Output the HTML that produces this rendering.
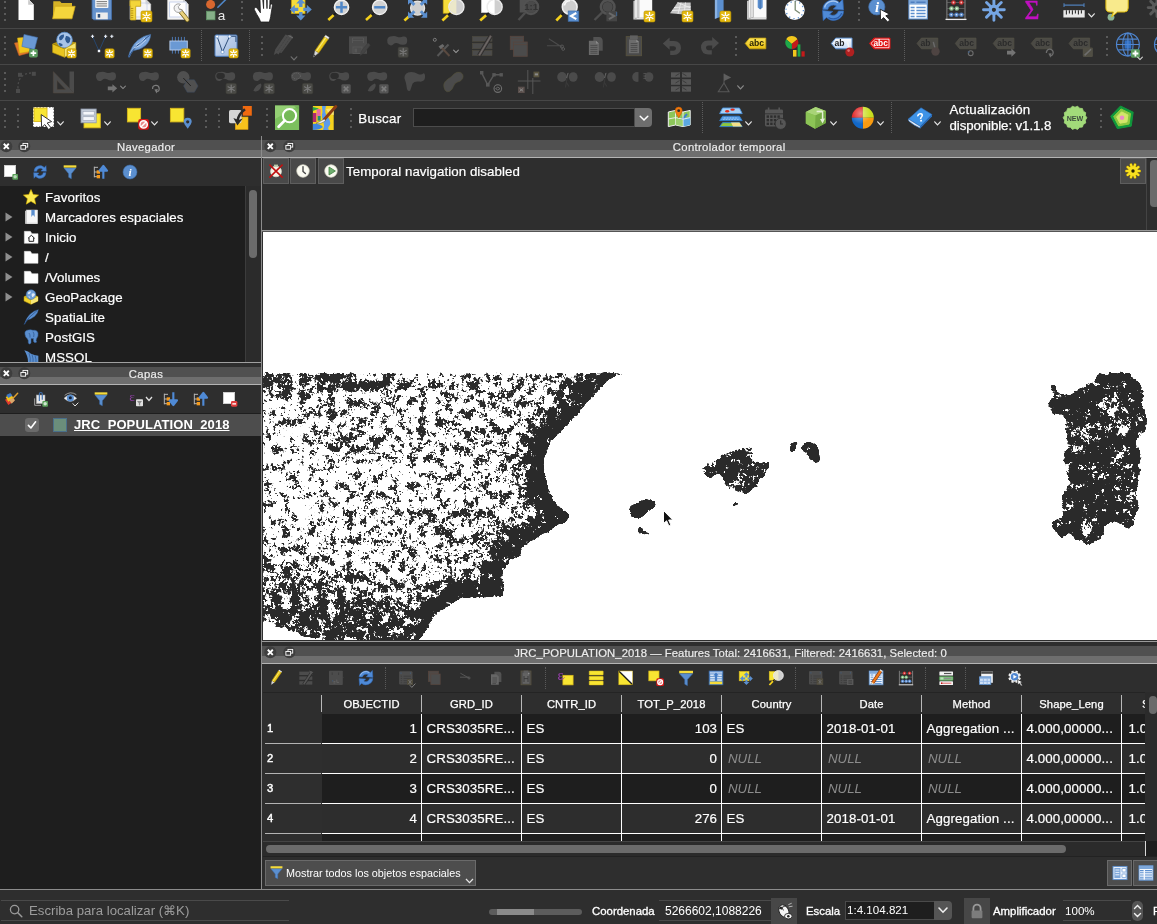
<!DOCTYPE html>
<html lang="es"><head><meta charset="utf-8"><title>QGIS</title>
<style>
html,body{margin:0;padding:0}
body{width:1157px;height:924px;overflow:hidden;background:#2e2e2e;position:relative;font-family:"Liberation Sans", sans-serif;}
#r{position:absolute;left:0;top:0;width:1157px;height:924px;overflow:hidden;will-change:transform}
#r>div,#r>span,#r>svg{position:absolute;display:block}
span{white-space:nowrap}
svg{overflow:visible}
</style></head>
<body>
<div id="r">
<div style="left:0px;top:28px;width:1157px;height:1px;background:#474747;"></div>
<div style="left:0px;top:64px;width:1157px;height:1px;background:#474747;"></div>
<div style="left:0px;top:100px;width:1157px;height:1px;background:#474747;"></div>
<svg style="left:14px;top:-4px" width="24" height="24" viewBox="0 0 24 24"><path d="M4.5 3 L14.2 3 L19.8 8.8 L19.8 24 L4.5 24 Z" fill="#fff"/><path d="M14.2 3 L14.2 8.8 L19.8 8.8 Z" fill="#c9c9c9"/><path d="M14.2 3.4 L19.4 8.8" stroke="#eee" stroke-width="0.8"/></svg>
<svg style="left:52px;top:-4px" width="24" height="24" viewBox="0 0 24 24"><path d="M1.3 5.3 L8 5.3 L9.5 7 L20 7 L20 12 L1 22.8 Z" fill="#d6b326"/><path d="M3.1 10.3 L23.2 10.3 L20 22.8 L0.6 22.8 Z" fill="#f4d53c" stroke="#d0a91a" stroke-width="0.7"/></svg>
<svg style="left:90px;top:-4px" width="24" height="24" viewBox="0 0 24 24"><path d="M2.1 3 L21.5 3 L21.5 23.8 L3.6 23.8 L2.1 22.3 Z" fill="#6592cc" stroke="#456fa8" stroke-width="0.8"/><rect x="5.2" y="3.4" width="13.2" height="8.7" rx="0.8" fill="#f4f4f4"/><path d="M6.5 5.6 L17 5.6 M6.5 7.8 L17 7.8 M6.5 10 L17 10" stroke="#6e6e6e" stroke-width="0.9"/><rect x="5.9" y="16.5" width="11.9" height="6.8" fill="#ececec"/><rect x="7.7" y="18" width="2.5" height="3.6" fill="#2f4f7a"/></svg>
<svg style="left:128px;top:-4px" width="24" height="24" viewBox="0 0 24 24"><path d="M2 3 L17.5 3 L22.7 8.2 L22.7 23.4 L2 23.4 Z" fill="#f6f6f6" stroke="#d4d4d4" stroke-width="0.6"/><path d="M17.5 3 L17.5 8.2 L22.7 8.2 Z" fill="#d0d0d0"/><rect x="5" y="7" width="14" height="14" fill="none" stroke="#c9d3ea" stroke-width="0.8"/><path d="M2 4.6 L12.7 4.6 L12.7 10.3 L7.7 10.3 L7.7 24 L2.6 24 L2.6 10 L2 10 Z" fill="#f3d53a" stroke="#c29e12" stroke-width="0.8"/><path d="M2.8 12.5 L5.3 12.5 M2.8 14.8 L5.3 14.8 M2.8 17.1 L5.3 17.1 M2.8 19.4 L5.3 19.4 M2.8 21.7 L5.3 21.7" stroke="#a8840a" stroke-width="0.8"/><rect x="13" y="15" width="11" height="11" rx="1.6" fill="#e4b90f" stroke="#b48d00" stroke-width="0.6"/><path d="M18.50 16.54 L18.50 24.46 M15.07 18.52 L21.93 22.48 M21.93 18.52 L15.07 22.48 " stroke="#fff" stroke-width="1.35" stroke-linecap="round"/><circle cx="18.5" cy="20.5" r="0.75" fill="#d8a800"/></svg>
<svg style="left:166px;top:-4px" width="24" height="24" viewBox="0 0 24 24"><path d="M1.6 3 L17 3 L22.3 8.2 L22.3 23.4 L1.6 23.4 Z" fill="#f6f6f6" stroke="#d4d4d4" stroke-width="0.6"/><path d="M17 3 L17 8.2 L22.3 8.2 Z" fill="#d0d0d0"/><rect x="3.6" y="6" width="16.5" height="15" fill="#fff" stroke="#c3cfea" stroke-width="0.9"/><path d="M14.2 15 L21.3 23.8" stroke="#6a5a1a" stroke-width="4.4" stroke-linecap="round"/><path d="M14.2 15 L21.3 23.8" stroke="#ead27c" stroke-width="3" stroke-linecap="round"/><path d="M14.5 8.4 A4.3 4.3 0 1 0 16.3 13.9 L13.2 13.2 L12.3 10.6 Z" fill="#f2f2f2" stroke="#9a9a9a" stroke-width="0.9"/></svg>
<svg style="left:204px;top:-4px" width="24" height="24" viewBox="0 0 24 24"><circle cx="6.6" cy="8.4" r="4.5" fill="#d8672f"/><path d="M13.9 11.3 L22.3 3" stroke="#4f86c6" stroke-width="1.6" stroke-linecap="round"/><rect x="2.4" y="15.2" width="8.6" height="8.6" fill="#86b089" stroke="#5f9465" stroke-width="0.7"/><text x="17.6" y="23.6" text-anchor="middle" font-family="Liberation Sans, sans-serif" font-size="13.5" fill="#e9e9e9">a</text></svg>
<svg style="left:251px;top:-4px" width="24" height="24" viewBox="0 0 24 24"><path d="M9.6 26 L18.4 26 C19 23 19.7 21.5 19.9 19 L21.4 9.6 C21.5 7.6 19.4 7.4 19.2 9.2 L18.8 13 L18.9 4.5 C18.9 2.4 16.2 2.4 16.2 4.5 L16 12.6 L15.6 2.8 C15.5 0.8 12.7 0.8 12.7 2.8 L12.6 12.6 L11.8 4.2 C11.6 2.2 8.9 2.4 9 4.4 L9.4 16.8 L6.3 12.4 C5 10.6 2.6 11.8 3.4 13.8 C4.6 17 6.6 19.4 8.2 22.4 Z" fill="#fff" stroke="#1c1c1c" stroke-width="0.8" stroke-linejoin="round"/></svg>
<svg style="left:289px;top:-4px" width="24" height="24" viewBox="0 0 24 24"><rect x="2.6" y="3.5" width="13.4" height="14" fill="#f6dc3a" stroke="#c9a50f" stroke-width="0.8"/><path d="M22.8 13.4 L17.8 18.0 L17.8 15.1 L14.3 15.1 L14.3 11.7 L17.8 11.7 L17.8 8.8 Z" fill="#5b8fcf"/><path d="M0.8 13.4 L5.8 8.8 L5.8 11.7 L9.3 11.7 L9.3 15.1 L5.8 15.1 L5.8 18.0 Z" fill="#5b8fcf"/><path d="M11.8 24.4 L7.2 19.4 L10.1 19.4 L10.1 15.9 L13.5 15.9 L13.5 19.4 L16.4 19.4 Z" fill="#5b8fcf"/><path d="M11.8 2.4 L16.4 7.4 L13.5 7.4 L13.5 10.9 L10.1 10.9 L10.1 7.4 L7.2 7.4 Z" fill="#5b8fcf"/></svg>
<svg style="left:327px;top:-4px" width="24" height="24" viewBox="0 0 24 24"><path d="M9.2 16.6 L6.6 19.1" stroke="#1a1a1a" stroke-width="1.6"/><path d="M6.6 19.1 L1.3 24" stroke="#f4d01c" stroke-width="2.6" stroke-linecap="butt"/><circle cx="14.5" cy="11.3" r="7.2" fill="#d2d2d2" stroke="#f2f2f2" stroke-width="1.3"/><path d="M9 11.3 L20 11.3 M14.5 5.8 L14.5 16.8" stroke="#4f86c6" stroke-width="2.5"/></svg>
<svg style="left:365px;top:-4px" width="24" height="24" viewBox="0 0 24 24"><path d="M9.4 16.6 L6.6 19.1" stroke="#1a1a1a" stroke-width="1.6"/><path d="M6.6 19.1 L1 24" stroke="#f4d01c" stroke-width="2.6" stroke-linecap="butt"/><circle cx="14.7" cy="11.3" r="7.2" fill="#d2d2d2" stroke="#f2f2f2" stroke-width="1.3"/><path d="M9.2 11.3 L20.2 11.3" stroke="#4f86c6" stroke-width="2.5"/></svg>
<svg style="left:403px;top:-4px" width="24" height="24" viewBox="0 0 24 24"><path d="M9.4 17.3 L6.8 19.7" stroke="#1a1a1a" stroke-width="1.6"/><path d="M6.8 19.7 L1.4 24.5" stroke="#f4d01c" stroke-width="2.6" stroke-linecap="butt"/><circle cx="14.6" cy="12.1" r="7" fill="#cfcfcf" stroke="#e6e6e6" stroke-width="1.3"/><path d="M5.0 2.5 L11.2 2.5 L5.0 8.7 Z" fill="#5b8fcf"/><path d="M7.0 4.5 L11.4 8.9" stroke="#5b8fcf" stroke-width="3"/><path d="M24.2 2.5 L18.0 2.5 L24.2 8.7 Z" fill="#5b8fcf"/><path d="M22.2 4.5 L17.8 8.9" stroke="#5b8fcf" stroke-width="3"/><path d="M5.0 21.7 L11.2 21.7 L5.0 15.5 Z" fill="#5b8fcf"/><path d="M7.0 19.7 L11.4 15.3" stroke="#5b8fcf" stroke-width="3"/><path d="M24.2 21.7 L18.0 21.7 L24.2 15.5 Z" fill="#5b8fcf"/><path d="M22.2 19.7 L17.8 15.3" stroke="#5b8fcf" stroke-width="3"/></svg>
<svg style="left:441px;top:-4px" width="24" height="24" viewBox="0 0 24 24"><rect x="2.2" y="2" width="10" height="15.2" fill="#f6dc3a" stroke="#c9a50f" stroke-width="0.7"/><path d="M9.8 16.5 L7.0 19.2" stroke="#1a1a1a" stroke-width="1.6"/><path d="M7.0 19.2 L1.4 24.5" stroke="#f4d01c" stroke-width="2.6" stroke-linecap="butt"/><circle cx="15.4" cy="10.9" r="7.6" fill="#cfcfcf" stroke="#ededed" stroke-width="1.3"/><path d="M15.4 3.900000000000001 A7.0 7.0 0 0 0 15.4 17.9 Z" fill="#ece8c9"/></svg>
<svg style="left:479px;top:-4px" width="24" height="24" viewBox="0 0 24 24"><rect x="2.5" y="2" width="10" height="14.5" fill="#fff" stroke="#d6d6d6" stroke-width="0.7"/><path d="M10.0 16.5 L7.1 19.2" stroke="#1a1a1a" stroke-width="1.6"/><path d="M7.1 19.2 L1.2 24.5" stroke="#f4d01c" stroke-width="2.6" stroke-linecap="butt"/><circle cx="15.6" cy="10.9" r="7.6" fill="#cfcfcf" stroke="#ededed" stroke-width="1.3"/><path d="M15.6 3.900000000000001 A7.0 7.0 0 0 0 15.6 17.9 Z" fill="#fff"/></svg>
<svg style="left:517px;top:-4px" width="24" height="24" viewBox="0 0 24 24"><rect x="2.7" y="2" width="9" height="14.5" fill="#515151"/><path d="M8.2 16.7 L1.5 24" stroke="#4e4e4e" stroke-width="2.4"/><circle cx="14" cy="10.9" r="7.0" fill="none" stroke="#525252" stroke-width="2.6"/><circle cx="14" cy="10.9" r="6" fill="#4a4a4a"/><text x="14.2" y="14.4" text-anchor="middle" font-family="Liberation Sans, sans-serif" font-weight="700" font-size="9.5" fill="#333">1:1</text></svg>
<svg style="left:555px;top:-4px" width="24" height="24" viewBox="0 0 24 24"><path d="M9.2 16.4 L6.6 19.1" stroke="#1a1a1a" stroke-width="1.6"/><path d="M6.6 19.1 L1.3 24.5" stroke="#f4d01c" stroke-width="2.6" stroke-linecap="butt"/><circle cx="14.7" cy="10.9" r="7.4" fill="#cdcdcd" stroke="#f0f0f0" stroke-width="1.6"/><path d="M9.5 9.5 A5.5 5.5 0 0 1 15 4.8" stroke="#fafafa" stroke-width="1.6" fill="none"/><rect x="13.2" y="15" width="10.6" height="10.3" fill="#5b8fcf" stroke="#3f6ea8" stroke-width="0.7"/><path d="M21.3 17 L16 20.1 L21.3 23.2" stroke="#fff" stroke-width="2.1" fill="none"/></svg>
<svg style="left:593px;top:-4px" width="24" height="24" viewBox="0 0 24 24"><path d="M9.1 16.5 L1.5 24" stroke="#4e4e4e" stroke-width="2.4"/><circle cx="14.7" cy="10.9" r="6.8" fill="none" stroke="#525252" stroke-width="2.6"/><circle cx="14.7" cy="10.9" r="5" fill="#4c4c4c"/><rect x="13.4" y="15" width="10.6" height="10.3" fill="#454545"/><path d="M16 17 L21.3 20.1 L16 23.2" stroke="#6a6a6a" stroke-width="2" fill="none"/><rect x="23" y="16" width="1.2" height="4" fill="#3f5f85"/></svg>
<svg style="left:632px;top:-4px" width="24" height="24" viewBox="0 0 24 24"><path d="M1.4 5 L8 2 L8 21 L1.4 23.4 Z" fill="#c9c9c9"/><rect x="7.5" y="2" width="12.7" height="19.4" fill="#fafafa"/><path d="M1.4 23.4 L7.5 21 L20.2 21 L20.2 23.4 Z" fill="#e2e2e2"/><path d="M4 3.5 L4 21.5" stroke="#f4f4f4" stroke-width="1.4"/><rect x="12" y="15" width="11" height="11" rx="1.6" fill="#e4b90f" stroke="#b48d00" stroke-width="0.6"/><path d="M17.50 16.54 L17.50 24.46 M14.07 18.52 L20.93 22.48 M20.93 18.52 L14.07 22.48 " stroke="#fff" stroke-width="1.35" stroke-linecap="round"/><circle cx="17.5" cy="20.5" r="0.75" fill="#d8a800"/></svg>
<svg style="left:670px;top:-4px" width="24" height="24" viewBox="0 0 24 24"><path d="M0 17.2 L7.5 6.5 L20.7 6.5 L20.7 16.5 L14 18.5 Z" fill="#c6c6c6"/><path d="M4 11.6 L20.7 10.6 M2 14.6 L20.7 13.6 M11 6.5 L8 17.8 M15.5 6.5 L14 18 M7.5 6.5 L20.7 12" stroke="#ececec" stroke-width="0.9" fill="none"/><rect x="12" y="15" width="11" height="11" rx="1.6" fill="#e4b90f" stroke="#b48d00" stroke-width="0.6"/><path d="M17.50 16.54 L17.50 24.46 M14.07 18.52 L20.93 22.48 M20.93 18.52 L14.07 22.48 " stroke="#fff" stroke-width="1.35" stroke-linecap="round"/><circle cx="17.5" cy="20.5" r="0.75" fill="#d8a800"/></svg>
<svg style="left:708px;top:-4px" width="24" height="24" viewBox="0 0 24 24"><path d="M6.9 0 L15.6 0 L15.6 20 L6.9 22.8 Z" fill="#5b8fcf"/><path d="M6.9 0 L9.2 0 L9.2 22 L6.9 22.8 Z" fill="#8ab2e2"/><rect x="11.9" y="15" width="11" height="11" rx="1.6" fill="#e4b90f" stroke="#b48d00" stroke-width="0.6"/><path d="M17.40 16.54 L17.40 24.46 M13.97 18.52 L20.83 22.48 M20.83 18.52 L13.97 22.48 " stroke="#fff" stroke-width="1.35" stroke-linecap="round"/><circle cx="17.4" cy="20.5" r="0.75" fill="#d8a800"/></svg>
<svg style="left:745px;top:-4px" width="24" height="24" viewBox="0 0 24 24"><path d="M2 5 L9.6 2 L9.6 21 L2 23.4 Z" fill="#c4c4c4"/><rect x="9" y="2" width="12.5" height="19.4" fill="#fafafa"/><path d="M2 23.4 L9 21 L21.5 21 L21.5 23.4 Z" fill="#dedede"/><path d="M4.6 4 L4.6 21.5 M7 3 L7 21" stroke="#f2f2f2" stroke-width="1.2"/><path d="M12.7 2 L17.7 2 L17.7 11.5 L15.2 13.4 L12.7 11.5 Z" fill="#5b8fcf"/><path d="M15.2 2 L15.2 13" stroke="#3f6ea8" stroke-width="0.8"/></svg>
<svg style="left:783px;top:-4px" width="24" height="24" viewBox="0 0 24 24"><circle cx="11.7" cy="14" r="10" fill="#fff"/><circle cx="11.7" cy="14" r="8.7" fill="none" stroke="#5b8fcf" stroke-width="1.3" stroke-dasharray="1.3 3.25"/><path d="M12.2 5.5 L12.2 14 L16.5 17" stroke="#7a8a72" stroke-width="1.3" fill="none" stroke-linecap="round"/></svg>
<svg style="left:821px;top:-4px" width="24" height="24" viewBox="0 0 24 24"><path d="M1.8 13.5 A10 9.6 0 0 1 18.5 6.5 L21.8 3.2 L22.6 14 L12.2 13 L15.3 10 A5.6 5.4 0 0 0 6.8 13.5 Z" fill="#4f8ad6" stroke="#2f66b3" stroke-width="0.7"/><path d="M22.6 15 A10 9.6 0 0 1 5.5 21.5 L2.2 24.6 L1.5 14.5 L11.8 15.5 L8.7 18.3 A5.6 5.4 0 0 0 17.4 15 Z" fill="#4f8ad6" stroke="#2f66b3" stroke-width="0.7"/><path d="M3.6 11.5 A8.6 8.2 0 0 1 17 6.6" stroke="#a8c8f0" stroke-width="1.3" fill="none"/><path d="M20.6 17 A8.6 8.2 0 0 1 7.5 21.5" stroke="#2a5ca8" stroke-width="1.2" fill="none"/></svg>
<svg style="left:867px;top:-4px" width="24" height="24" viewBox="0 0 24 24"><circle cx="9.8" cy="10.9" r="8.1" fill="#5b8fcf" stroke="#4472b0" stroke-width="0.7"/><text x="10.2" y="16.4" font-family="Liberation Serif, serif" font-style="italic" font-weight="700" font-size="15" fill="#fff" text-anchor="middle">i</text><path d="M13.2 13.2 L13.6 24.4 L16.6 21.6 L20.6 26 L22.8 24 L18.8 19.8 L22.6 18.2 Z" fill="#fff" stroke="#1e1e1e" stroke-width="0.9" stroke-linejoin="round"/></svg>
<svg style="left:906px;top:-4px" width="24" height="24" viewBox="0 0 24 24"><rect x="2.9" y="2" width="18.4" height="21" fill="#fff" stroke="#5b8fcf" stroke-width="1"/><rect x="2.9" y="2" width="18.4" height="6.6" fill="#7fa8da"/><path d="M4.6 6.2 L8.6 6.2 M10.4 6.2 L19.6 6.2" stroke="#4f7fc0" stroke-width="1.6"/><path d="M4.6 11.6 L8.6 11.6 M10.4 11.6 L19.6 11.6 M4.6 14.6 L8.6 14.6 M10.4 14.6 L19.6 14.6 M4.6 17.6 L8.6 17.6 M10.4 17.6 L19.6 17.6 M4.6 20.6 L8.6 20.6 M10.4 20.6 L19.6 20.6 " stroke="#5b8fcf" stroke-width="1.5"/></svg>
<svg style="left:944px;top:-4px" width="24" height="24" viewBox="0 0 24 24"><path d="M2.9 0 L2.9 23 M21 0 L21 23" stroke="#8e8e8e" stroke-width="0.9"/><path d="M2.9 6.5 L21 6.5 M2.9 12.5 L21 12.5 M2.9 18.7 L21 18.7" stroke="#6e6e6e" stroke-width="0.7"/><path d="M1.5 23.4 L22.5 23.4" stroke="#ededed" stroke-width="1.3"/><circle cx="9.5" cy="6.5" r="2.3" fill="#c93030"/><circle cx="9.5" cy="6.5" r="0.9" fill="#f6c0c0"/><circle cx="17.3" cy="6.5" r="2.3" fill="#c93030"/><circle cx="17.3" cy="6.5" r="0.9" fill="#f6c0c0"/><circle cx="7.5" cy="12.5" r="2.3" fill="#86b888"/><circle cx="7.5" cy="12.5" r="0.9" fill="#e6f4e6"/><circle cx="12.8" cy="12.5" r="2.3" fill="#86b888"/><circle cx="12.8" cy="12.5" r="0.9" fill="#e6f4e6"/><circle cx="7.3" cy="18.7" r="2.3" fill="#4f7fc0"/><circle cx="7.3" cy="18.7" r="0.9" fill="#d6e6fa"/><circle cx="12.5" cy="18.7" r="2.3" fill="#4f7fc0"/><circle cx="12.5" cy="18.7" r="0.9" fill="#d6e6fa"/><circle cx="17.4" cy="18.7" r="2.3" fill="#4f7fc0"/><circle cx="17.4" cy="18.7" r="0.9" fill="#d6e6fa"/></svg>
<svg style="left:982px;top:-4px" width="24" height="24" viewBox="0 0 24 24"><path d="M11.90 17.80 L11.90 24.20 M9.07 16.63 L4.55 21.15 M7.90 13.80 L1.50 13.80 M9.07 10.97 L4.55 6.45 M11.90 9.80 L11.90 3.40 M14.73 10.97 L19.25 6.45 M15.90 13.80 L22.30 13.80 M14.73 16.63 L19.25 21.15 " stroke="#75a5e3" stroke-width="2.9" stroke-linecap="round"/><circle cx="11.9" cy="13.8" r="3.7" fill="none" stroke="#75a5e3" stroke-width="3.2"/></svg>
<svg style="left:1020px;top:-4px" width="24" height="24" viewBox="0 0 24 24"><text x="12" y="23.4" text-anchor="middle" font-family="Liberation Serif, serif" font-size="27" fill="#c010c0" stroke="#c010c0" stroke-width="0.5" textLength="15" lengthAdjust="spacingAndGlyphs">Σ</text></svg>
<svg style="left:1062px;top:-4px" width="24" height="24" viewBox="0 0 24 24"><path d="M2 9.1 L22 9.1 M2 7.2 L2 11 M22 7.2 L22 11" stroke="#4f7fb8" stroke-width="1.1"/><rect x="1.4" y="14.2" width="21.3" height="7.3" fill="#e9e9e9"/><path d="M4.4 14.2 L4.4 18.4 M7.4 14.2 L7.4 17.4 M10.4 14.2 L10.4 18.4 M13.4 14.2 L13.4 17.4 M16.4 14.2 L16.4 18.4 M19.4 14.2 L19.4 17.4" stroke="#2d2d2d" stroke-width="1.1"/></svg>
<svg style="left:1105px;top:-4px" width="24" height="24" viewBox="0 0 24 24"><circle cx="6" cy="21.2" r="3.4" fill="#8cb696"/><path d="M5 0 L19.5 0 Q23.2 0 23.2 4 L23.2 12 Q23.2 16 19.5 16 L12.5 16 L6.6 20.8 L8.4 16 L5 16 Q0.9 16 0.9 12 L0.9 4 Q0.9 0 5 0 Z" fill="#f8ea8c" stroke="#dcb80a" stroke-width="1"/></svg>
<svg style="left:1144px;top:-4px" width="24" height="24" viewBox="0 0 24 24"><path d="M13.00 15.60 L13.00 20.44 M10.17 14.43 L6.75 17.85 M9.00 11.60 L4.16 11.60 M10.17 8.77 L6.75 5.35 M13.00 7.60 L13.00 2.76 M15.83 8.77 L19.25 5.35 M17.00 11.60 L21.84 11.60 M15.83 14.43 L19.25 17.85 " stroke="#5a5a5a" stroke-width="2.9" stroke-linecap="round"/><circle cx="13" cy="11.6" r="3.7" fill="none" stroke="#5a5a5a" stroke-width="3.2"/></svg>
<div style="left:4px;top:0.5px;width:2px;height:2px;background:#5a5a5a;"></div>
<div style="left:4px;top:6.5px;width:2px;height:2px;background:#5a5a5a;"></div>
<div style="left:4px;top:12.5px;width:2px;height:2px;background:#5a5a5a;"></div>
<div style="left:4px;top:18.5px;width:2px;height:2px;background:#5a5a5a;"></div>
<div style="left:241px;top:0.5px;width:2px;height:2px;background:#5a5a5a;"></div>
<div style="left:241px;top:6.5px;width:2px;height:2px;background:#5a5a5a;"></div>
<div style="left:241px;top:12.5px;width:2px;height:2px;background:#5a5a5a;"></div>
<div style="left:241px;top:18.5px;width:2px;height:2px;background:#5a5a5a;"></div>
<div style="left:858px;top:0.5px;width:2px;height:2px;background:#5a5a5a;"></div>
<div style="left:858px;top:6.5px;width:2px;height:2px;background:#5a5a5a;"></div>
<div style="left:858px;top:12.5px;width:2px;height:2px;background:#5a5a5a;"></div>
<div style="left:858px;top:18.5px;width:2px;height:2px;background:#5a5a5a;"></div>
<svg style="left:1088px;top:13px" width="7" height="5" viewBox="0 0 7 5"><path d="M0.7 0.8 L3.5 3.8 L6.3 0.8" stroke="#e8e8e8" stroke-width="1.2" fill="none" stroke-linecap="round"/></svg>
<svg style="left:14px;top:34px" width="24" height="24" viewBox="0 0 24 24"><path d="M0.4 9 L10 7.3 L14.8 19 L5 21.7 Z" fill="#e0762e" stroke="#b85a1c" stroke-width="0.5"/><path d="M3.5 4 L14 2.9 L16 17.5 L5.5 19.2 Z" fill="#f2c71c" stroke="#c9a20f" stroke-width="0.5"/><path d="M10 0.4 L23.6 3.5 L20.5 15.4 L7.9 12.5 Z" fill="#6a99d4" stroke="#4472b0" stroke-width="0.6"/><rect x="15" y="15" width="8.8" height="8.4" rx="1.6" fill="#5a9a5e"/><path d="M19.4 16.4 L19.4 22 M16.6 19.2 L22.2 19.2" stroke="#fff" stroke-width="1.7"/></svg>
<svg style="left:52px;top:34px" width="24" height="24" viewBox="0 0 24 24"><path d="M0.6 9.5 L12.5 5.5 L23.8 8.5 L12.5 15 Z" fill="#b8960a"/><circle cx="12.5" cy="6" r="7.8" fill="#a8c4e8" stroke="#5b8fcf" stroke-width="0.8"/><path d="M7 3.5 Q8.5 0.5 12 0.5 Q12.5 3 10.5 5 Q9 7 7.5 6 Z M14 2 Q17 1.5 18.5 4.5 Q18.5 8 16 9.5 Q13.5 8 13 5 Z M6.5 9 Q9 8.5 11 11 Q9.5 13 7.5 11.5 Z" fill="#2f5a92"/><path d="M0.6 10 L12.5 15 L12.5 23.3 L0.6 18.5 Z" fill="#e9c520" stroke="#b8960a" stroke-width="0.6"/><path d="M12.5 15 L23.8 8.5 L23.8 17 L12.5 23.3 Z" fill="#f7e672" stroke="#c9a50f" stroke-width="0.6"/><rect x="15" y="14.8" width="9.2" height="9.2" rx="1.6" fill="#e4b90f" stroke="#b48d00" stroke-width="0.6"/><path d="M19.60 16.09 L19.60 22.71 M16.73 17.74 L22.47 21.06 M22.47 17.74 L16.73 21.06 " stroke="#fff" stroke-width="1.35" stroke-linecap="round"/><circle cx="19.6" cy="19.4" r="0.75" fill="#d8a800"/></svg>
<svg style="left:90px;top:34px" width="24" height="24" viewBox="0 0 24 24"><path d="M2.5 2.3 L9 17 L15.6 2.3" stroke="#27466e" stroke-width="1" fill="none"/><path d="M0.8999999999999999 2.3 L4.1 2.3 M2.5 0.6999999999999997 L2.5 3.9" stroke="#e8eef8" stroke-width="1.1"/><path d="M14.0 2.3 L17.2 2.3 M15.6 0.6999999999999997 L15.6 3.9" stroke="#e8eef8" stroke-width="1.1"/><path d="M20.2 2.3 L23.400000000000002 2.3 M21.8 0.6999999999999997 L21.8 3.9" stroke="#e8eef8" stroke-width="1.1"/><rect x="7.8" y="15.8" width="2.4" height="2.4" fill="#f2f6fc"/><rect x="15" y="14.8" width="9.2" height="9.2" rx="1.6" fill="#e4b90f" stroke="#b48d00" stroke-width="0.6"/><path d="M19.60 16.09 L19.60 22.71 M16.73 17.74 L22.47 21.06 M22.47 17.74 L16.73 21.06 " stroke="#fff" stroke-width="1.35" stroke-linecap="round"/><circle cx="19.6" cy="19.4" r="0.75" fill="#d8a800"/></svg>
<svg style="left:128px;top:34px" width="24" height="24" viewBox="0 0 24 24"><path d="M0.3 23 Q3 12 9.5 6.5 Q15.5 1.5 22.7 0.4 Q22.2 7 17.5 11.5 Q12 16 5.5 16.5 Q3 19 1.4 23.2 Z" fill="#7aa4da" stroke="#3f6ea8" stroke-width="0.6"/><path d="M0.6 23 Q6 12.5 21.5 1.5" stroke="#2a4f86" stroke-width="0.9" fill="none"/><path d="M6 14 Q12 13 18 6 M8 11 Q12 9.5 17 4" stroke="#c6daf2" stroke-width="0.8" fill="none"/><rect x="15.2" y="14.8" width="9.2" height="9.2" rx="1.6" fill="#e4b90f" stroke="#b48d00" stroke-width="0.6"/><path d="M19.80 16.09 L19.80 22.71 M16.93 17.74 L22.67 21.06 M22.67 17.74 L16.93 21.06 " stroke="#fff" stroke-width="1.35" stroke-linecap="round"/><circle cx="19.799999999999997" cy="19.4" r="0.75" fill="#d8a800"/></svg>
<svg style="left:166px;top:34px" width="24" height="24" viewBox="0 0 24 24"><path d="M6.4 2.9 L6.4 7 M9.4 2.9 L9.4 7 M12.4 2.9 L12.4 7 M15.4 2.9 L15.4 7 M18.4 2.9 L18.4 7 M6.4 16 L6.4 19.6 M9.4 16 L9.4 19.6 M12.4 16 L12.4 19.6 " stroke="#4f7fc0" stroke-width="0.9"/><rect x="3.9" y="7" width="17.4" height="9" fill="#6a99d4" stroke="#b8cdec" stroke-width="0.9"/><rect x="15" y="14.8" width="9.2" height="9.2" rx="1.6" fill="#e4b90f" stroke="#b48d00" stroke-width="0.6"/><path d="M19.60 16.09 L19.60 22.71 M16.73 17.74 L22.47 21.06 M22.47 17.74 L16.73 21.06 " stroke="#fff" stroke-width="1.35" stroke-linecap="round"/><circle cx="19.6" cy="19.4" r="0.75" fill="#d8a800"/></svg>
<svg style="left:214px;top:34px" width="24" height="24" viewBox="0 0 24 24"><defs><linearGradient id="gv" x1="0" y1="0" x2="1" y2="1"><stop offset="0" stop-color="#dbe6f5"/><stop offset="0.5" stop-color="#b7cbe8"/><stop offset="1" stop-color="#9fb8dc"/></linearGradient></defs><rect x="1" y="1" width="22" height="21.3" rx="1" fill="url(#gv)" stroke="#4f7fc0" stroke-width="1"/><path d="M3.1 2.3 L8.5 18 L15.6 2.3 M15.6 2.3 L21.9 2.3 L21.9 8" stroke="#2f4f7a" stroke-width="1" fill="none"/><circle cx="3.1" cy="2.6" r="1.5" fill="#fff" stroke="#4f7fc0" stroke-width="0.6"/><circle cx="15.6" cy="2.6" r="1.5" fill="#fff" stroke="#4f7fc0" stroke-width="0.6"/><circle cx="8.5" cy="18" r="1.6" fill="#fff" stroke="#4f7fc0" stroke-width="0.6"/><rect x="15" y="14.8" width="9.2" height="9.2" rx="1.6" fill="#e4b90f" stroke="#b48d00" stroke-width="0.6"/><path d="M19.60 16.09 L19.60 22.71 M16.73 17.74 L22.47 21.06 M22.47 17.74 L16.73 21.06 " stroke="#fff" stroke-width="1.35" stroke-linecap="round"/><circle cx="19.6" cy="19.4" r="0.75" fill="#d8a800"/></svg>
<svg style="left:272px;top:34px" width="24" height="24" viewBox="0 0 24 24"><path d="M1.8 21 L3.2 15.5 L13.5 0.6 L16.5 1.5 L18.5 0.4 L21.2 3.2 L9.5 19 L7.5 18.6 L6.8 20.5 L4.6 19.2 Z" fill="#4b4b4b"/><path d="M5.5 17 L15 3 M8.6 17.6 L18 4" stroke="#3c3c3c" stroke-width="0.8" stroke-dasharray="1 1"/><path d="M16.5 1.5 L21 4" stroke="#777" stroke-width="0.8"/></svg>
<svg style="left:309px;top:34px" width="24" height="24" viewBox="0 0 24 24"><path d="M4.6 23 L6.2 16.4 L9.8 18.8 Z" fill="#d8d8d8" stroke="#9a9a9a" stroke-width="0.5"/><path d="M4.6 23 L5.2 20.6 L6.6 21.6 Z" fill="#444"/><path d="M6.2 16.4 L15.6 2.6 L19.3 5 L9.8 18.8 Z" fill="#e9c81a" stroke="#b8960a" stroke-width="0.6"/><path d="M7.5 17 L16.8 3.6" stroke="#f8e878" stroke-width="1.1"/><path d="M15.6 2.6 L16.6 1.2 L20.2 3.6 L19.3 5 Z" fill="#f4f4f4" stroke="#c0c0c0" stroke-width="0.5"/></svg>
<svg style="left:347px;top:34px" width="24" height="24" viewBox="0 0 24 24"><rect x="2" y="2.3" width="18" height="17.5" fill="#4b4b4b"/><path d="M5.5 4 L16.5 4 M5.5 6.6 L16.5 6.6 M5.5 4 L5.5 9 M16.5 4 L16.5 9" stroke="#575757" stroke-width="1" fill="none"/><rect x="6" y="13" width="9" height="6.5" fill="none" stroke="#575757" stroke-width="1"/><rect x="7.4" y="14.5" width="2.6" height="4" fill="#575757"/><path d="M13 21.5 L15 16 L21 9 L23.3 11 L17.6 18.4 Z" fill="#444" stroke="#3c3c3c" stroke-width="0.6"/></svg>
<svg style="left:386px;top:34px" width="24" height="24" viewBox="0 0 24 24"><path transform="translate(0 0)" d="M1.2 6 Q1.6 2.2 6 2.2 Q9 1.6 11 2.8 Q14.5 4 17 2.6 Q21.2 1.8 21.2 6.4 Q21.4 10.6 17.4 10.8 Q14 11 12.4 9.6 Q9.6 8.2 7.4 10.2 Q5 12.4 2.6 10.6 Q1 9 1.2 6 Z" fill="#4b4b4b" stroke="none" stroke-width="1"/><rect x="12" y="13" width="10.4" height="10.4" rx="1.6" fill="#4a4a46" stroke="#3a3a36" stroke-width="0.6"/><path d="M17.20 14.66 L17.20 21.74 M14.14 16.43 L20.26 19.97 M20.26 16.43 L14.14 19.97 " stroke="#777" stroke-width="1.2" stroke-linecap="round"/></svg>
<svg style="left:431px;top:34px" width="24" height="24" viewBox="0 0 24 24"><circle cx="3.8" cy="5.8" r="1.5" fill="none" stroke="#8e8e8e" stroke-width="0.8"/><path d="M6.5 22 L17.5 10.5" stroke="#575757" stroke-width="2"/><path d="M7.5 12.5 L11.5 10 L13.5 12 L10 15.5 Z" fill="#6a6a6a"/><path d="M11 14 L18.5 22" stroke="#5a4a40" stroke-width="2"/></svg>
<svg style="left:470px;top:34px" width="24" height="24" viewBox="0 0 24 24"><rect x="2.3" y="2.3" width="19.7" height="5" fill="#4b4b4b" stroke="#4e4a3e" stroke-width="0.6"/><rect x="2.3" y="9.2" width="19.7" height="5.6" fill="#4b4b4b" stroke="#4e4a3e" stroke-width="0.6"/><rect x="2.3" y="16.3" width="19.7" height="5.4" fill="#4b4b4b" stroke="#4e4a3e" stroke-width="0.6"/><path d="M9 21.7 L21 1.6" stroke="#2d2d2d" stroke-width="4.2"/><path d="M9 21.7 L21 1.6" stroke="#5c5452" stroke-width="2.4"/><path d="M9.4 21 L20.6 2.4" stroke="#777" stroke-width="0.7"/></svg>
<svg style="left:507px;top:34px" width="24" height="24" viewBox="0 0 24 24"><rect x="3.3" y="2.3" width="13.1" height="13.1" fill="#4b4b4b" stroke="#56463f" stroke-width="0.9"/><path d="M3.3 4.8 L16.4 4.8" stroke="#56463f" stroke-width="0.9"/><rect x="6.4" y="8" width="13.8" height="14.3" fill="#4b4b4b" stroke="#56463f" stroke-width="0.9"/><path d="M6.4 10.6 L20.2 10.6" stroke="#56463f" stroke-width="0.9"/></svg>
<svg style="left:543px;top:34px" width="24" height="24" viewBox="0 0 24 24"><path d="M5.8 4.8 L19.5 13.5 M3.9 11.7 L18 11.7" stroke="#4b4b4b" stroke-width="1.1"/><circle cx="19" cy="12.6" r="1.6" fill="none" stroke="#575757" stroke-width="1"/><circle cx="20.2" cy="15" r="1.4" fill="none" stroke="#575757" stroke-width="1"/></svg>
<svg style="left:584px;top:34px" width="24" height="24" viewBox="0 0 24 24"><path d="M9.3 2.9 L15 2.9 Q18.7 3.2 18.7 7 L18.7 16.7 L9.3 16.7 Z" fill="#525252"/><path d="M4.9 6.7 L12 6.7 L14.9 9.6 L14.9 21 L4.9 21 Z" fill="#6a6a6a"/><path d="M12 6.7 L12 9.6 L14.9 9.6 Z" fill="#8a8a8a"/><path d="M6.4 11.4 L13.4 11.4 M6.4 13.4 L13.4 13.4 M6.4 15.4 L13.4 15.4 M6.4 17.4 L13.4 17.4 M6.4 19.2 L13.4 19.2 " stroke="#4a4a4a" stroke-width="0.9"/></svg>
<svg style="left:622px;top:34px" width="24" height="24" viewBox="0 0 24 24"><rect x="4.2" y="2.6" width="15.3" height="19.1" fill="#4a4a4a" stroke="#57523f" stroke-width="0.9"/><rect x="8" y="1.4" width="7.8" height="3.8" fill="#606060"/><path d="M7 5.4 L14.4 5.4 L17 8 L17 19.2 L7 19.2 Z" fill="#6c6c6c"/><path d="M14.4 5.4 L14.4 8 L17 8 Z" fill="#8c8c8c"/><path d="M8.6 9.6 L15.4 9.6 M8.6 11.6 L15.4 11.6 M8.6 13.6 L15.4 13.6 M8.6 15.6 L15.4 15.6 M8.6 17.4 L15.4 17.4 " stroke="#4a4a4a" stroke-width="0.9"/></svg>
<svg style="left:660px;top:34px" width="24" height="24" viewBox="0 0 24 24"><path d="M2.8 9.6 L9.6 3.5 L9.6 7 L14 7 Q21 7.4 21 14 Q20.6 20.6 13.6 21 L10.2 21 L10.2 16.8 L13.2 16.8 Q16 16.4 16 14 Q15.8 12.4 13.6 12.2 L9.6 12.2 L9.6 15.8 Z" fill="#4b4b4b"/></svg>
<svg style="left:698px;top:34px" width="24" height="24" viewBox="0 0 24 24"><path d="M21 9 L14.2 2.9 L14.2 6.4 L9.8 6.4 Q3 6.8 3 13.4 Q3.4 20 10.4 20.4 L13.8 20.4 L13.8 16.2 L10.8 16.2 Q8 15.8 8 13.4 Q8.2 11.8 10.4 11.6 L14.2 11.6 L14.2 15.2 Z" fill="#4b4b4b"/></svg>
<svg style="left:743px;top:34px" width="24" height="24" viewBox="0 0 24 24"><defs><linearGradient id="gl" x1="0" y1="0" x2="0" y2="1"><stop offset="0" stop-color="#fbe45a"/><stop offset="1" stop-color="#e9bf10"/></linearGradient></defs><path d="M2.2 9.45 L6.6000000000000005 4.1 L22.8 4.1 L22.8 14.8 L6.6000000000000005 14.8 Z" fill="url(#gl)" stroke="#c9a50f" stroke-width="0.8" stroke-linejoin="round"/><text x="13.6" y="12.4" text-anchor="middle" font-family="Liberation Sans, sans-serif" font-weight="700" font-size="8.6" fill="#2b2505">abc</text></svg>
<svg style="left:781px;top:34px" width="24" height="24" viewBox="0 0 24 24"><path d="M10.8 10.0 L5.17 5.25 A6.5 6.5 0 0 1 16.43 5.25 Z" fill="#f2c71c"/><path d="M10.8 10.0 L16.43 5.25 A6.5 6.5 0 0 1 10.80 15.00 Z" fill="#c41a1a"/><path d="M10.8 10.0 L10.80 15.00 A6.5 6.5 0 0 1 5.17 5.25 Z" fill="#1ea84a"/><rect x="12" y="16" width="3.5" height="6.6" fill="#f2c71c"/><rect x="16.6" y="10.4" width="2.8" height="12.2" fill="#1ea84a"/><rect x="20.5" y="17.3" width="3.2" height="5.3" fill="#c41a1a"/></svg>
<svg style="left:829px;top:34px" width="24" height="24" viewBox="0 0 24 24"><defs><linearGradient id="gp" x1="0" y1="0" x2="0" y2="1"><stop offset="0" stop-color="#ffffff"/><stop offset="1" stop-color="#c6daf4"/></linearGradient></defs><path d="M2.3 9.45 L6.7 4.1 L23 4.1 L23 14.8 L6.7 14.8 Z" fill="url(#gp)" stroke="#5b8fcf" stroke-width="1" stroke-linejoin="round"/><text x="10.6" y="12.4" text-anchor="middle" font-family="Liberation Sans, sans-serif" font-weight="700" font-size="8.6" fill="#1e1e1e">ab</text><path d="M18.6 8.6 L20.6 16" stroke="#f4f4f4" stroke-width="1.6" stroke-linecap="round"/><circle cx="20.8" cy="18" r="4.5" fill="#b02020"/><circle cx="19.6" cy="16.6" r="1.3" fill="#d86a6a"/></svg>
<svg style="left:867px;top:34px" width="24" height="24" viewBox="0 0 24 24"><path d="M2.5 9.45 L6.9 4.1 L23 4.1 L23 14.8 L6.9 14.8 Z" fill="#e01212" stroke="#e01212" stroke-width="1" stroke-linejoin="round"/><path d="M3.9 9.45 L8.3 5.2 L22 5.2 L22 13.7 L8.3 13.7 Z" fill="none" stroke="#fff" stroke-width="0.8" stroke-linejoin="round"/><text x="13.6" y="12.3" text-anchor="middle" font-family="Liberation Sans, sans-serif" font-weight="700" font-size="8.4" fill="#fff">abc</text></svg>
<svg style="left:915px;top:34px" width="24" height="24" viewBox="0 0 24 24"><path d="M2 9.45 L6.4 4.1 L22.8 4.1 L22.8 14.8 L6.4 14.8 Z" fill="#4b4a45" stroke="#555246" stroke-width="0.7" stroke-linejoin="round"/><text x="10.4" y="12.4" text-anchor="middle" font-family="Liberation Sans, sans-serif" font-weight="700" font-size="8.6" fill="#2b2b2b">ab</text><path d="M18.4 8.4 L20.2 15" stroke="#6a6a6a" stroke-width="1.4" stroke-linecap="round"/><circle cx="20.5" cy="17.5" r="4.2" fill="#4e4442"/></svg>
<svg style="left:953px;top:34px" width="24" height="24" viewBox="0 0 24 24"><path d="M2.3 9.45 L6.7 4.1 L23 4.1 L23 14.8 L6.7 14.8 Z" fill="#4b4a45" stroke="#555246" stroke-width="0.7" stroke-linejoin="round"/><text x="13.6" y="12.4" text-anchor="middle" font-family="Liberation Sans, sans-serif" font-weight="700" font-size="8.6" fill="#2b2b2b">abc</text><circle cx="17.7" cy="19.2" r="2.4" fill="none" stroke="#6e6e6e" stroke-width="1.1"/><path d="M14.6 17.6 L16 19.4 L17 17.4" fill="#3f5f85"/></svg>
<svg style="left:991px;top:34px" width="24" height="24" viewBox="0 0 24 24"><path d="M2.2 9.45 L6.6000000000000005 4.1 L22.9 4.1 L22.9 14.8 L6.6000000000000005 14.8 Z" fill="#4b4a45" stroke="#555246" stroke-width="0.7" stroke-linejoin="round"/><text x="13.6" y="12.4" text-anchor="middle" font-family="Liberation Sans, sans-serif" font-weight="700" font-size="8.6" fill="#2b2b2b">abc</text><path d="M16 16.8 L20.4 16.8 L20.4 14.6 L24.8 18.7 L20.4 22.8 L20.4 20.6 L16 20.6 Z" fill="#747474"/></svg>
<svg style="left:1029px;top:34px" width="24" height="24" viewBox="0 0 24 24"><path d="M2.2 9.45 L6.6000000000000005 4.1 L22.8 4.1 L22.8 14.8 L6.6000000000000005 14.8 Z" fill="#4b4a45" stroke="#555246" stroke-width="0.7" stroke-linejoin="round"/><text x="13.6" y="12.4" text-anchor="middle" font-family="Liberation Sans, sans-serif" font-weight="700" font-size="8.6" fill="#2b2b2b">abc</text><path d="M17.4 19 A3.4 3.4 0 1 1 21 22" stroke="#6e6e6e" stroke-width="1.3" fill="none"/><path d="M19.4 19.6 L22.6 19.2 L21.4 23.8 Z" fill="#6e6e6e"/></svg>
<svg style="left:1067px;top:34px" width="24" height="24" viewBox="0 0 24 24"><path d="M2 9.45 L6.4 4.1 L22.7 4.1 L22.7 14.8 L6.4 14.8 Z" fill="#4b4a45" stroke="#555246" stroke-width="0.7" stroke-linejoin="round"/><text x="13.6" y="12.4" text-anchor="middle" font-family="Liberation Sans, sans-serif" font-weight="700" font-size="8.6" fill="#2b2b2b">abc</text><rect x="15.8" y="13.5" width="10.1" height="9.5" rx="1.2" fill="#504e44"/><path d="M17.6 21.4 L24 15.2" stroke="#6e6e6e" stroke-width="1.6"/></svg>
<svg style="left:1116px;top:34px" width="24" height="24" viewBox="0 0 24 24"><circle cx="11.9" cy="10.5" r="11.4" fill="#2d2d2d" stroke="#4f86d0" stroke-width="1.2"/><rect x="8.5" y="6.3" width="6.8" height="8.4" fill="#2f6fc4"/><ellipse cx="11.9" cy="10.5" rx="5.2" ry="11.4" fill="none" stroke="#4f86d0" stroke-width="1.1"/><path d="M0.5 10.5 L23.3 10.5 M2.3 5.1 L21.5 5.1 M2.3 15.9 L21.5 15.9 M11.9 -0.9000000000000004 L11.9 21.9" stroke="#4f86d0" stroke-width="1.1"/><rect x="15" y="15.3" width="8.9" height="8.5" rx="1.4" fill="#5a9a5e"/><path d="M19.45 16.6 L19.45 22.4 M16.5 19.5 L22.4 19.5" stroke="#fff" stroke-width="1.8"/></svg>
<svg style="left:1154px;top:34px" width="24" height="24" viewBox="0 0 24 24"><circle cx="11.9" cy="10.5" r="11.4" fill="#2d2d2d" stroke="#4f86d0" stroke-width="1.2"/><rect x="8.5" y="6.3" width="6.8" height="8.4" fill="#2f6fc4"/><ellipse cx="11.9" cy="10.5" rx="5.2" ry="11.4" fill="none" stroke="#4f86d0" stroke-width="1.1"/><path d="M0.5 10.5 L23.3 10.5 M2.3 5.1 L21.5 5.1 M2.3 15.9 L21.5 15.9 M11.9 -0.9000000000000004 L11.9 21.9" stroke="#4f86d0" stroke-width="1.1"/></svg>
<div style="left:4px;top:36px;width:2px;height:2px;background:#5a5a5a;"></div>
<div style="left:4px;top:42px;width:2px;height:2px;background:#5a5a5a;"></div>
<div style="left:4px;top:48px;width:2px;height:2px;background:#5a5a5a;"></div>
<div style="left:4px;top:54px;width:2px;height:2px;background:#5a5a5a;"></div>
<div style="left:261px;top:36px;width:2px;height:2px;background:#5a5a5a;"></div>
<div style="left:261px;top:42px;width:2px;height:2px;background:#5a5a5a;"></div>
<div style="left:261px;top:48px;width:2px;height:2px;background:#5a5a5a;"></div>
<div style="left:261px;top:54px;width:2px;height:2px;background:#5a5a5a;"></div>
<div style="left:735px;top:36px;width:2px;height:2px;background:#5a5a5a;"></div>
<div style="left:735px;top:42px;width:2px;height:2px;background:#5a5a5a;"></div>
<div style="left:735px;top:48px;width:2px;height:2px;background:#5a5a5a;"></div>
<div style="left:735px;top:54px;width:2px;height:2px;background:#5a5a5a;"></div>
<div style="left:1106px;top:36px;width:2px;height:2px;background:#5a5a5a;"></div>
<div style="left:1106px;top:42px;width:2px;height:2px;background:#5a5a5a;"></div>
<div style="left:1106px;top:48px;width:2px;height:2px;background:#5a5a5a;"></div>
<div style="left:1106px;top:54px;width:2px;height:2px;background:#5a5a5a;"></div>
<div style="left:201px;top:30px;width:0;height:31px;border-left:1px dotted #5c5c5c"></div>
<div style="left:249px;top:30px;width:0;height:31px;border-left:1px dotted #5c5c5c"></div>
<div style="left:818px;top:30px;width:0;height:31px;border-left:1px dotted #5c5c5c"></div>
<div style="left:904px;top:30px;width:0;height:31px;border-left:1px dotted #5c5c5c"></div>
<svg style="left:290px;top:56px" width="8" height="5" viewBox="0 0 7 5"><path d="M0.7 0.8 L3.5 3.8 L6.3 0.8" stroke="#6e6e6e" stroke-width="1.2" fill="none" stroke-linecap="round"/></svg>
<svg style="left:453px;top:49px" width="6" height="5" viewBox="0 0 7 5"><path d="M0.7 0.8 L3.5 3.8 L6.3 0.8" stroke="#9a9a9a" stroke-width="1.2" fill="none" stroke-linecap="round"/></svg>
<svg style="left:1137px;top:56px" width="6" height="5" viewBox="0 0 7 5"><path d="M0.7 0.8 L3.5 3.8 L6.3 0.8" stroke="#d8d8d8" stroke-width="1.2" fill="none" stroke-linecap="round"/></svg>
<svg style="left:14px;top:70px" width="24" height="24" viewBox="0 0 24 24"><path d="M4 18.5 Q3.5 4 17 3" stroke="#4b4b4b" stroke-width="1.3" fill="none" stroke-dasharray="2.2 2"/><rect x="4" y="2.8" width="4" height="4" fill="#4b4b4b"/><rect x="17.8" y="1.8" width="4" height="4" fill="#4b4b4b"/><rect x="2" y="19" width="4" height="4" fill="#4b4b4b"/></svg>
<svg style="left:52px;top:70px" width="24" height="24" viewBox="0 0 24 24"><path d="M1.3 1.6 L22 23 L1.3 23 Z M5 10.4 L5 19.4 L13.6 19.4 Z" fill="#4b4b4b" fill-rule="evenodd" stroke="#55483f" stroke-width="0.5"/><path d="M17.5 1.6 L22 1.6 L22 23 L17.5 18.4 Z" fill="#4b4b4b"/></svg>
<svg style="left:94px;top:70px" width="24" height="24" viewBox="0 0 24 24"><path transform="translate(0.8 -0.3)" d="M1.2 6 Q1.6 2.2 6 2.2 Q9 1.6 11 2.8 Q14.5 4 17 2.6 Q21.2 1.8 21.2 6.4 Q21.4 10.6 17.4 10.8 Q14 11 12.4 9.6 Q9.6 8.2 7.4 10.2 Q5 12.4 2.6 10.6 Q1 9 1.2 6 Z" fill="#4b4b4b" stroke="none" stroke-width="1"/><path d="M13.8 16.4 L18.4 16.4 L18.4 14.2 L23.2 18.3 L18.4 22.4 L18.4 20.2 L13.8 20.2 Z" fill="#727272"/></svg>
<svg style="left:137px;top:70px" width="24" height="24" viewBox="0 0 24 24"><path transform="translate(0.7 -0.3)" d="M1.2 6 Q1.6 2.2 6 2.2 Q9 1.6 11 2.8 Q14.5 4 17 2.6 Q21.2 1.8 21.2 6.4 Q21.4 10.6 17.4 10.8 Q14 11 12.4 9.6 Q9.6 8.2 7.4 10.2 Q5 12.4 2.6 10.6 Q1 9 1.2 6 Z" fill="#4b4b4b" stroke="none" stroke-width="1"/><path d="M15.6 19 A3.3 3.3 0 1 1 19.2 22" stroke="#7c7c7c" stroke-width="1.2" fill="none"/><path d="M17.4 19.4 L20.8 19 L19.6 23.6 Z" fill="#7c7c7c"/></svg>
<svg style="left:176px;top:70px" width="24" height="24" viewBox="0 0 24 24"><circle cx="7.3" cy="7.3" r="6.2" fill="#505050"/><polygon points="22.0,16.0 18.4,22.2 11.2,22.2 7.6,16.0 11.2,9.8 18.4,9.8" fill="#505050" stroke="#3a4a62" stroke-width="0.5"/><path d="M7.3 8 L14.8 16" stroke="#222" stroke-width="1"/></svg>
<svg style="left:214px;top:70px" width="24" height="24" viewBox="0 0 24 24"><path transform="translate(0 -0.3)" d="M1.2 6 Q1.6 2.2 6 2.2 Q9 1.6 11 2.8 Q14.5 4 17 2.6 Q21.2 1.8 21.2 6.4 Q21.4 10.6 17.4 10.8 Q14 11 12.4 9.6 Q9.6 8.2 7.4 10.2 Q5 12.4 2.6 10.6 Q1 9 1.2 6 Z" fill="#4b4b4b" stroke="none" stroke-width="1"/><ellipse transform="translate(0 -0.3)" cx="6.6" cy="6.2" rx="4.3" ry="3.1" fill="#2d2d2d"/><rect x="11.9" y="13.3" width="10.6" height="10.6" rx="1.6" fill="#4a4a46" stroke="#3a3a36" stroke-width="0.6"/><path d="M17.20 15.00 L17.20 22.20 M14.08 16.80 L20.32 20.40 M20.32 16.80 L14.08 20.40 " stroke="#777" stroke-width="1.2" stroke-linecap="round"/></svg>
<svg style="left:252px;top:70px" width="24" height="24" viewBox="0 0 24 24"><path transform="translate(-0.3 -0.3)" d="M1.2 6 Q1.6 2.2 6 2.2 Q9 1.6 11 2.8 Q14.5 4 17 2.6 Q21.2 1.8 21.2 6.4 Q21.4 10.6 17.4 10.8 Q14 11 12.4 9.6 Q9.6 8.2 7.4 10.2 Q5 12.4 2.6 10.6 Q1 9 1.2 6 Z" fill="#4b4b4b" stroke="none" stroke-width="1"/><path d="M1.4 21 Q3 15.5 8.6 13.5 Q10.5 15 8 19 Q6 22.5 1.4 21 Z" fill="#4b4b4b"/><rect x="11.8" y="13.3" width="10.6" height="10.6" rx="1.6" fill="#4a4a46" stroke="#3a3a36" stroke-width="0.6"/><path d="M17.10 15.00 L17.10 22.20 M13.98 16.80 L20.22 20.40 M20.22 16.80 L13.98 20.40 " stroke="#777" stroke-width="1.2" stroke-linecap="round"/></svg>
<svg style="left:290px;top:70px" width="24" height="24" viewBox="0 0 24 24"><path transform="translate(-0.2 -0.3)" d="M1.2 6 Q1.6 2.2 6 2.2 Q9 1.6 11 2.8 Q14.5 4 17 2.6 Q21.2 1.8 21.2 6.4 Q21.4 10.6 17.4 10.8 Q14 11 12.4 9.6 Q9.6 8.2 7.4 10.2 Q5 12.4 2.6 10.6 Q1 9 1.2 6 Z" fill="#4b4b4b" stroke="none" stroke-width="1"/><ellipse cx="6.4" cy="6" rx="4" ry="3" fill="none" stroke="#6a6a6a" stroke-width="0.9" stroke-dasharray="1.2 1"/><rect x="12.3" y="13.3" width="10.6" height="10.6" rx="1.6" fill="#4a4a46" stroke="#3a3a36" stroke-width="0.6"/><path d="M17.60 15.00 L17.60 22.20 M14.48 16.80 L20.72 20.40 M20.72 16.80 L14.48 20.40 " stroke="#777" stroke-width="1.2" stroke-linecap="round"/></svg>
<svg style="left:328px;top:70px" width="24" height="24" viewBox="0 0 24 24"><path transform="translate(0 -0.3)" d="M1.2 6 Q1.6 2.2 6 2.2 Q9 1.6 11 2.8 Q14.5 4 17 2.6 Q21.2 1.8 21.2 6.4 Q21.4 10.6 17.4 10.8 Q14 11 12.4 9.6 Q9.6 8.2 7.4 10.2 Q5 12.4 2.6 10.6 Q1 9 1.2 6 Z" fill="#4b4b4b" stroke="none" stroke-width="1"/><ellipse transform="translate(0 -0.3)" cx="6.6" cy="6.2" rx="4.3" ry="3.1" fill="#2d2d2d"/><rect x="13.4" y="14.2" width="9.3" height="9.3" rx="1.4" fill="#555"/><path d="M15.8 16.599999999999998 L20.300000000000004 21.1 M20.300000000000004 16.599999999999998 L15.8 21.1" stroke="#7c7c7c" stroke-width="1.5"/></svg>
<svg style="left:366px;top:70px" width="24" height="24" viewBox="0 0 24 24"><path transform="translate(0 -0.3)" d="M1.2 6 Q1.6 2.2 6 2.2 Q9 1.6 11 2.8 Q14.5 4 17 2.6 Q21.2 1.8 21.2 6.4 Q21.4 10.6 17.4 10.8 Q14 11 12.4 9.6 Q9.6 8.2 7.4 10.2 Q5 12.4 2.6 10.6 Q1 9 1.2 6 Z" fill="#4b4b4b" stroke="none" stroke-width="1"/><path d="M1.7 21 Q3.3 15.5 8.9 13.5 Q10.8 15 8.3 19 Q6.3 22.5 1.7 21 Z" fill="#4b4b4b"/><rect x="13.3" y="14.2" width="9.3" height="9.3" rx="1.4" fill="#555"/><path d="M15.700000000000001 16.599999999999998 L20.200000000000003 21.1 M20.200000000000003 16.599999999999998 L15.700000000000001 21.1" stroke="#7c7c7c" stroke-width="1.5"/></svg>
<svg style="left:403px;top:70px" width="24" height="24" viewBox="0 0 24 24"><path d="M1.4 8 Q1.4 2.4 8 2 Q12 2 15 4 Q18.5 5.4 20.5 3.2 Q22.4 3.4 22 7.5 Q21.6 12 16.5 11.6 Q11.5 10.8 9.6 13.4 Q8.4 17 7.2 20.4 Q5 22.2 4 19 Q3.4 13 1.4 8 Z" fill="#4b4b4b"/></svg>
<svg style="left:441px;top:70px" width="24" height="24" viewBox="0 0 24 24"><path d="M3 17.5 Q1.6 12.6 7 9 Q10.6 7 13 4 Q16 1.4 19.6 2.4 Q23.2 4.4 21.6 8.6 Q20 11.6 16.6 12 Q13.4 13 12.4 16.4 Q10.6 21.4 6.6 21.8 Q3.8 21.4 3 17.5 Z" fill="#4b4b4b" stroke="#545038" stroke-width="0.6"/></svg>
<svg style="left:479px;top:70px" width="24" height="24" viewBox="0 0 24 24"><path d="M2.5 2.6 L8.7 14.8 L15 4.8 L22.5 4.8" stroke="#575757" stroke-width="1.4" fill="none"/><rect x="1" y="1" width="3.4" height="3.4" fill="#575757"/><rect x="13.3" y="3.1" width="3.4" height="3.4" fill="#575757"/><rect x="20.5" y="3.1" width="3.4" height="3.4" fill="#575757"/><rect x="7" y="13" width="3.6" height="3.6" fill="#575757"/><circle cx="18.8" cy="18.6" r="3.8" fill="none" stroke="#6e6e6e" stroke-width="1.1"/><path d="M16.6 18.6 Q18.8 15.6 21 18.6 Q18.8 21.6 16.6 18.6" fill="none" stroke="#6e6e6e" stroke-width="0.9"/></svg>
<svg style="left:517px;top:70px" width="24" height="24" viewBox="0 0 24 24"><path d="M10.8 0 L10.8 19 M15.8 8 L15.8 24 M0.8 11 L23.5 11" stroke="#575757" stroke-width="1"/><rect x="16.5" y="1.6" width="5.8" height="5.7" fill="#59543f"/><rect x="17.8" y="3.4" width="3.2" height="2" fill="#8a8a8a"/><rect x="1" y="16.7" width="6.7" height="6.3" fill="#5a4f4c"/><path d="M2.6 18.4 L6.2 21.4 M6.2 18.4 L2.6 21.4" stroke="#8a8a8a" stroke-width="1"/></svg>
<svg style="left:555px;top:70px" width="24" height="24" viewBox="0 0 24 24"><ellipse cx="7" cy="7" rx="4.8" ry="5" fill="#4b4b4b"/><ellipse cx="18.2" cy="7" rx="4.4" ry="4.8" fill="#4b4b4b"/><path d="M13.4 2.5 L11.4 12 L10.4 17.5 M11.2 12 L14.0 16.5" stroke="#3a3a3a" stroke-width="1.1" fill="none"/><path d="M11.6 8 L13.0 3" stroke="#777" stroke-width="0.7"/></svg>
<svg style="left:593px;top:70px" width="24" height="24" viewBox="0 0 24 24"><ellipse cx="6.5" cy="7" rx="4.8" ry="5" fill="#4b4b4b"/><ellipse cx="18.5" cy="7" rx="4.4" ry="4.8" fill="#4b4b4b"/><path d="M13.3 2.5 L11.3 12 L10.3 17.5 M11.1 12 L13.9 16.5" stroke="#3a3a3a" stroke-width="1.1" fill="none"/><path d="M11.5 8 L12.9 3" stroke="#777" stroke-width="0.7"/></svg>
<svg style="left:631px;top:70px" width="24" height="24" viewBox="0 0 24 24"><ellipse cx="6" cy="7" rx="4.8" ry="5" fill="#4b4b4b"/><ellipse cx="18" cy="7" rx="4.4" ry="4.8" fill="#4b4b4b"/><path d="M7.5 2.2 L11 2.2 L11 11.8 L7.5 11.8 Z" fill="#2d2d2d"/><path d="M12.4 3.6 L15 3.6 M12.4 6 L15 6 M12.4 8.4 L15 8.4" stroke="#5a5a5a" stroke-width="0.8"/></svg>
<svg style="left:669px;top:70px" width="24" height="24" viewBox="0 0 24 24"><rect x="2" y="2.3" width="9" height="5.2" fill="#575757"/><rect x="13" y="2.3" width="9" height="5.2" fill="#575757"/><path d="M6.5 5.9 L10.5 3.5000000000000004 M17.5 5.9 L13.5 3.5000000000000004" stroke="#333" stroke-width="0.8"/><rect x="2" y="9.2" width="9" height="5.600000000000001" fill="#575757"/><rect x="13" y="9.2" width="9" height="5.600000000000001" fill="#575757"/><path d="M6.5 13.0 L10.5 10.6 M17.5 13.0 L13.5 10.6" stroke="#333" stroke-width="0.8"/><rect x="2" y="16.3" width="9" height="5.399999999999999" fill="#575757"/><rect x="13" y="16.3" width="9" height="5.399999999999999" fill="#575757"/><path d="M6.5 20.0 L10.5 17.6 M17.5 20.0 L13.5 17.6" stroke="#333" stroke-width="0.8"/></svg>
<svg style="left:712px;top:70px" width="24" height="24" viewBox="0 0 24 24"><path d="M6.3 21.7 L17 21.7 L12 13 Z" fill="none" stroke="#575757" stroke-width="1.1"/><path d="M12 13 L12 3.6" stroke="#575757" stroke-width="1"/><path d="M12 3.8 L19.2 7.5 L12 11 Z" fill="#5e5e5e"/></svg>
<div style="left:4px;top:72px;width:2px;height:2px;background:#5a5a5a;"></div>
<div style="left:4px;top:78px;width:2px;height:2px;background:#5a5a5a;"></div>
<div style="left:4px;top:84px;width:2px;height:2px;background:#5a5a5a;"></div>
<div style="left:4px;top:90px;width:2px;height:2px;background:#5a5a5a;"></div>
<svg style="left:120px;top:85px" width="6" height="5" viewBox="0 0 7 5"><path d="M0.7 0.8 L3.5 3.8 L6.3 0.8" stroke="#8a8a8a" stroke-width="1.2" fill="none" stroke-linecap="round"/></svg>
<svg style="left:737px;top:85px" width="7" height="5" viewBox="0 0 7 5"><path d="M0.7 0.8 L3.5 3.8 L6.3 0.8" stroke="#8a8a8a" stroke-width="1.2" fill="none" stroke-linecap="round"/></svg>
<svg style="left:32px;top:106px" width="24" height="24" viewBox="0 0 24 24"><rect x="1" y="1" width="21" height="20" fill="#fff"/><rect x="1" y="1" width="21" height="20" fill="none" stroke="#2d2d2d" stroke-width="1" stroke-dasharray="1.6 1.6"/><rect x="2" y="2" width="13" height="13.5" fill="#f8e532" stroke="#d9b81c" stroke-width="0.9"/><path d="M9.2 8.6 L9.6 21.6 L12.8 18.6 L16.6 23.6 L19 21.8 L15.2 17 L19.6 15.6 Z" fill="#fff" stroke="#1e1e1e" stroke-width="0.9" stroke-linejoin="round"/></svg>
<svg style="left:79px;top:106px" width="24" height="24" viewBox="0 0 24 24"><rect x="5" y="7.8" width="16.3" height="14" fill="#f8e532" stroke="#d9b81c" stroke-width="0.9"/><rect x="2" y="3" width="15.2" height="13.8" fill="#c4ccd8" stroke="#8e98aa" stroke-width="0.8"/><rect x="4" y="5.4" width="11.2" height="3.6" fill="#f4f6fa" stroke="#8e98aa" stroke-width="0.5"/><rect x="4" y="10.8" width="11.2" height="3.6" fill="#f4f6fa" stroke="#8e98aa" stroke-width="0.5"/></svg>
<svg style="left:126px;top:106px" width="24" height="24" viewBox="0 0 24 24"><rect x="1.4" y="2.3" width="13.2" height="13.6" fill="#f8e532" stroke="#d9b81c" stroke-width="0.9"/><rect x="12.2" y="13" width="10.8" height="10.8" rx="2.4" fill="#d01818"/><circle cx="17.6" cy="18.4" r="3.7" fill="#e88a8a" stroke="#fff" stroke-width="1.5"/><path d="M15 21 L20.2 15.8" stroke="#fff" stroke-width="1.5"/></svg>
<svg style="left:168px;top:106px" width="24" height="24" viewBox="0 0 24 24"><rect x="2.4" y="2.3" width="13.4" height="13.6" fill="#f8e532" stroke="#d9b81c" stroke-width="0.9"/><path d="M19.7 22.8 Q15.7 17.6 15.7 15.8 A4 4 0 0 1 23.7 15.8 Q23.7 17.6 19.7 22.8 Z" fill="#5b8fcf"/><circle cx="19.7" cy="15.8" r="1.6" fill="#2d2d2d"/></svg>
<svg style="left:228px;top:106px" width="24" height="24" viewBox="0 0 24 24"><rect x="14.8" y="0" width="9" height="9.7" fill="#f06a10"/><rect x="7.3" y="11" width="12.7" height="12.4" fill="#f8c21c" stroke="#e0a010" stroke-width="0.6"/><rect x="1" y="4" width="12.5" height="13.2" rx="1.6" fill="#d6d6d6"/><path d="M17 3.2 Q10.5 8 9.6 14.6" stroke="#2a2a2a" stroke-width="2.6" fill="none"/><path d="M5.4 12 L9.4 19.4 L14.8 12.6 L10.6 14 Z" fill="#2a2a2a"/></svg>
<svg style="left:275px;top:106px" width="24" height="24" viewBox="0 0 24 24"><rect x="0" y="-0.4" width="24.1" height="24.4" fill="#7cc05e"/><path d="M0 -0.4 L24.1 -0.4 L0 13 Z" fill="#94cf74"/><path d="M24.1 -0.4 L24.1 4 L19 0 Z" fill="#6aa850" opacity="0.6"/><circle cx="14.5" cy="9.7" r="6.6" fill="#6fb252" fill-opacity="0.55" stroke="#fff" stroke-width="2"/><path d="M9.6 14.6 L3.6 20.8" stroke="#fff" stroke-width="2.8" stroke-linecap="round"/></svg>
<svg style="left:311px;top:106px" width="24" height="24" viewBox="0 0 24 24"><rect x="1.9" y="0" width="20.8" height="24" fill="#f6d21e"/><path d="M11 0 L15 0 Q13 6 16 10 Q20 14 19 19 Q16 22 18 24 L12 24 Q14 20 12.5 16 Q10 11 11.5 6 Z" fill="#5b9bec"/><path d="M1.9 18 Q8 17 12 21 Q9 24 1.9 24 Z" fill="#3f86e0"/><rect x="1.9" y="7" width="3.4" height="9" fill="#b02870"/><rect x="5.6" y="3" width="4" height="7" fill="#e86aa0"/><path d="M1.9 1 L8 2.6 L1.9 5 Z" fill="#2aa84a"/><rect x="6.6" y="10" width="3" height="4.6" fill="#1e8a7a"/><path d="M15 3 L22.7 2 L22.7 9 L18 8 Z" fill="#f8e27a"/><path d="M24.8 0.6 L13.2 13.4" stroke="#8a3c14" stroke-width="3" stroke-linecap="round"/><path d="M13.4 13 Q10 15 5 17.4 Q9.6 18.4 14.6 15 Z" fill="#f2f2f2" stroke="#555" stroke-width="0.5"/></svg>
<svg style="left:667px;top:106px" width="24" height="24" viewBox="0 0 24 24"><path d="M1.3 6 L8.5 4.4 L16 6 L23.2 4.4 L23.2 19 L16 20.6 L8.5 19 L1.3 20.6 Z" fill="#8cc65a" stroke="#f2f2f2" stroke-width="1"/><path d="M16 12 L23.2 11 L23.2 19 L16 20.6 Z" fill="#5ba8e0"/><path d="M15 13.6 L20 8" stroke="#3f7fd0" stroke-width="2"/><path d="M8.5 4.4 L8.5 19 M16 6 L16 20.6 M1.3 13 L8.5 11.6 L16 13.2 L23.2 11.6" stroke="#f2f2f2" stroke-width="0.9" fill="none"/><path d="M8.5 13 L16 14 L16 20.6 L8.5 19 Z" fill="#a6d67c" opacity="0.6"/><path d="M11.7 11.8 Q8.2 6.6 8.2 4.6 A3.5 3.5 0 0 1 15.2 4.6 Q15.2 6.6 11.7 11.8 Z" fill="#f07a10" stroke="#c85a00" stroke-width="0.6"/><circle cx="11.7" cy="4.7" r="1.4" fill="#2d2d2d"/></svg>
<svg style="left:719px;top:106px" width="24" height="24" viewBox="0 0 24 24"><path d="M3.6 16.6 L20.4 16.6 L23.2 20.6 L0.7 20.6 Z" fill="#8cc63f" stroke="#2f7fd0" stroke-width="0.9"/><path d="M12 16.6 L20.4 16.6 L23.2 20.6 L14 20.6 Z" fill="#f4e08a"/><path d="M3.6 10.2 L20.4 10.2 L23.2 14.6 L0.7 14.6 Z" fill="#5ba0e8" stroke="#2f7fd0" stroke-width="0.9"/><path d="M5 12 L19 12 M4 13.4 L20 13.4" stroke="#a8d0f8" stroke-width="0.8" stroke-dasharray="1.6 1.2"/><path d="M3.6 2 L20.4 2 L23.2 7.6 L0.7 7.6 Z" fill="#a6d0f6" stroke="#4f96e0" stroke-width="0.9"/><ellipse cx="8.2" cy="5.2" rx="2" ry="1.3" fill="#e02a1a"/><ellipse cx="13.6" cy="3.6" rx="2.2" ry="1.2" fill="#e02a1a"/></svg>
<svg style="left:762px;top:106px" width="24" height="24" viewBox="0 0 24 24"><rect x="3" y="3.4" width="18" height="17" rx="1.4" fill="#565656"/><rect x="5.8" y="1.5" width="1.6" height="3.6" fill="#565656"/><rect x="16.4" y="1.5" width="1.6" height="3.6" fill="#565656"/><path d="M3 7.8 L21 7.8" stroke="#2d2d2d" stroke-width="0.8"/><rect x="4.6" y="9.4" width="2.4" height="2.4" fill="#2d2d2d"/><rect x="8.2" y="9.4" width="2.4" height="2.4" fill="#2d2d2d"/><rect x="11.8" y="9.4" width="2.4" height="2.4" fill="#2d2d2d"/><rect x="15.4" y="9.4" width="2.4" height="2.4" fill="#2d2d2d"/><rect x="4.6" y="13.0" width="2.4" height="2.4" fill="#2d2d2d"/><rect x="8.2" y="13.0" width="2.4" height="2.4" fill="#2d2d2d"/><rect x="11.8" y="13.0" width="2.4" height="2.4" fill="#2d2d2d"/><rect x="15.4" y="13.0" width="2.4" height="2.4" fill="#2d2d2d"/><rect x="4.6" y="16.6" width="2.4" height="2.4" fill="#2d2d2d"/><rect x="8.2" y="16.6" width="2.4" height="2.4" fill="#2d2d2d"/><rect x="11.8" y="16.6" width="2.4" height="2.4" fill="#2d2d2d"/><rect x="15.4" y="16.6" width="2.4" height="2.4" fill="#2d2d2d"/><circle cx="18.7" cy="17.8" r="5.6" fill="#565656" stroke="#2d2d2d" stroke-width="0.8"/><path d="M18.7 14.6 L18.7 18 L21 18" stroke="#2d2d2d" stroke-width="1.1" fill="none"/></svg>
<svg style="left:804px;top:106px" width="24" height="24" viewBox="0 0 24 24"><path d="M1.8 6 L11.6 0.9 L21.9 5 L21.9 17 L11 22.8 L1.8 17.6 Z" fill="#7fb848"/><path d="M1.8 6 L11.6 0.9 L21.9 5 L11.4 9.4 Z" fill="#a8d478"/><path d="M11.4 9.4 L21.9 5 L21.9 17 L11 22.8 Z" fill="#74aa44"/><path d="M1.8 6 L11.4 9.4 L11 22.8 L1.8 17.6 Z" fill="#8cc456"/><path d="M12.6 5.6 L17.6 5.2 Q18.6 5.4 18.6 6.8 L18.6 14" stroke="#e4f0d8" stroke-width="1.5" fill="none"/><path d="M16 13 L18.6 17.4 L21 12.6 Z" fill="#e4f0d8"/></svg>
<svg style="left:851px;top:106px" width="24" height="24" viewBox="0 0 24 24"><defs><radialGradient id="gpie" cx="0.4" cy="0.3" r="0.8"><stop offset="0" stop-color="#fff" stop-opacity="0.45"/><stop offset="0.6" stop-color="#fff" stop-opacity="0"/></radialGradient></defs><path d="M11.8 11.8 L0.8000000000000007 11.8 A11 11 0 0 1 11.8 0.8000000000000007 Z" fill="#e01818"/><path d="M11.8 11.8 L11.8 0.8000000000000007 A11 11 0 0 1 22.8 11.8 Z" fill="#c8de1e"/><path d="M11.8 11.8 L22.8 11.8 A11 11 0 0 1 11.8 22.8 Z" fill="#f89a10"/><path d="M11.8 11.8 L11.8 22.8 A11 11 0 0 1 0.8000000000000007 11.8 Z" fill="#1268c8"/><circle cx="11.8" cy="11.8" r="11" fill="url(#gpie)"/></svg>
<svg style="left:908px;top:106px" width="24" height="24" viewBox="0 0 24 24"><path d="M0.4 13 L13 1.8 L24 8.6 L12.4 20.4 Z" fill="#3f93e6" stroke="#2a6fc0" stroke-width="0.6"/><path d="M0.4 13 L12.4 20.4 L12.4 22.2 Q6 19.6 1.2 15.4 Q0 14.2 0.4 13 Z" fill="#e8eef6" stroke="#2a6fc0" stroke-width="0.6"/><path d="M12.4 20.4 L24 8.6 L24 10.6 L12.4 22.2 Z" fill="#2a6fc0"/><text x="12.6" y="15.4" text-anchor="middle" font-family="Liberation Sans, sans-serif" font-weight="700" font-size="12" fill="#fff" transform="rotate(-14 12.6 11)">?</text></svg>
<svg style="left:1063px;top:106px" width="24" height="24" viewBox="0 0 24 24"><polygon points="23.90,11.80 22.33,14.16 22.72,16.96 20.29,18.41 19.42,21.10 16.60,21.35 14.65,23.40 12.00,22.40 9.35,23.40 7.40,21.35 4.58,21.10 3.71,18.41 1.28,16.96 1.67,14.16 0.10,11.80 1.67,9.44 1.28,6.64 3.71,5.19 4.58,2.50 7.40,2.25 9.35,0.20 12.00,1.20 14.65,0.20 16.60,2.25 19.42,2.50 20.29,5.19 22.72,6.64 22.33,9.44" fill="#a2da7a" stroke="#a2da7a" stroke-width="0.8" stroke-linejoin="round"/><text x="12" y="14.7" text-anchor="middle" font-family="Liberation Sans, sans-serif" font-weight="700" font-size="8" fill="#3c4a3e" textLength="16.6" lengthAdjust="spacingAndGlyphs">NEW</text></svg>
<svg style="left:1110px;top:106px" width="24" height="24" viewBox="0 0 24 24"><polygon points="0.72,10.13 10.52,-0.02 23.20,6.17 21.23,20.14 7.34,22.59" fill="#10983c" stroke="#10983c" stroke-width="1" stroke-linejoin="round"/><polygon points="3.69,10.55 11.04,2.94 20.55,7.57 19.07,18.05 8.65,19.89" fill="#8cc83f" stroke="#8cc83f" stroke-width="1" stroke-linejoin="round"/><polygon points="6.66,10.96 11.56,5.89 17.90,8.98 16.92,15.97 9.97,17.19" fill="#d2e66a" stroke="#d2e66a" stroke-width="1" stroke-linejoin="round"/><circle cx="12.0" cy="11.8" r="2.3" fill="#ea8cc4"/></svg>
<div style="left:4px;top:108px;width:2px;height:2px;background:#5a5a5a;"></div>
<div style="left:4px;top:114px;width:2px;height:2px;background:#5a5a5a;"></div>
<div style="left:4px;top:120px;width:2px;height:2px;background:#5a5a5a;"></div>
<div style="left:4px;top:126px;width:2px;height:2px;background:#5a5a5a;"></div>
<div style="left:17px;top:108px;width:2px;height:2px;background:#5a5a5a;"></div>
<div style="left:17px;top:114px;width:2px;height:2px;background:#5a5a5a;"></div>
<div style="left:17px;top:120px;width:2px;height:2px;background:#5a5a5a;"></div>
<div style="left:17px;top:126px;width:2px;height:2px;background:#5a5a5a;"></div>
<div style="left:205px;top:108px;width:2px;height:2px;background:#5a5a5a;"></div>
<div style="left:205px;top:114px;width:2px;height:2px;background:#5a5a5a;"></div>
<div style="left:205px;top:120px;width:2px;height:2px;background:#5a5a5a;"></div>
<div style="left:205px;top:126px;width:2px;height:2px;background:#5a5a5a;"></div>
<div style="left:218px;top:108px;width:2px;height:2px;background:#5a5a5a;"></div>
<div style="left:218px;top:114px;width:2px;height:2px;background:#5a5a5a;"></div>
<div style="left:218px;top:120px;width:2px;height:2px;background:#5a5a5a;"></div>
<div style="left:218px;top:126px;width:2px;height:2px;background:#5a5a5a;"></div>
<div style="left:266px;top:108px;width:2px;height:2px;background:#5a5a5a;"></div>
<div style="left:266px;top:114px;width:2px;height:2px;background:#5a5a5a;"></div>
<div style="left:266px;top:120px;width:2px;height:2px;background:#5a5a5a;"></div>
<div style="left:266px;top:126px;width:2px;height:2px;background:#5a5a5a;"></div>
<div style="left:350px;top:108px;width:2px;height:2px;background:#5a5a5a;"></div>
<div style="left:350px;top:114px;width:2px;height:2px;background:#5a5a5a;"></div>
<div style="left:350px;top:120px;width:2px;height:2px;background:#5a5a5a;"></div>
<div style="left:350px;top:126px;width:2px;height:2px;background:#5a5a5a;"></div>
<div style="left:1100px;top:108px;width:2px;height:2px;background:#5a5a5a;"></div>
<div style="left:1100px;top:114px;width:2px;height:2px;background:#5a5a5a;"></div>
<div style="left:1100px;top:120px;width:2px;height:2px;background:#5a5a5a;"></div>
<div style="left:1100px;top:126px;width:2px;height:2px;background:#5a5a5a;"></div>
<div style="left:702px;top:102px;width:0;height:31px;border-left:1px dotted #5c5c5c"></div>
<div style="left:891px;top:102px;width:0;height:31px;border-left:1px dotted #5c5c5c"></div>
<svg style="left:57px;top:121px" width="7" height="5" viewBox="0 0 7 5"><path d="M0.7 0.8 L3.5 3.8 L6.3 0.8" stroke="#e6e6e6" stroke-width="1.2" fill="none" stroke-linecap="round"/></svg>
<svg style="left:104px;top:121px" width="7" height="5" viewBox="0 0 7 5"><path d="M0.7 0.8 L3.5 3.8 L6.3 0.8" stroke="#e6e6e6" stroke-width="1.2" fill="none" stroke-linecap="round"/></svg>
<svg style="left:151px;top:121px" width="7" height="5" viewBox="0 0 7 5"><path d="M0.7 0.8 L3.5 3.8 L6.3 0.8" stroke="#e6e6e6" stroke-width="1.2" fill="none" stroke-linecap="round"/></svg>
<svg style="left:745px;top:121px" width="7" height="5" viewBox="0 0 7 5"><path d="M0.7 0.8 L3.5 3.8 L6.3 0.8" stroke="#e6e6e6" stroke-width="1.2" fill="none" stroke-linecap="round"/></svg>
<svg style="left:830px;top:121px" width="7" height="5" viewBox="0 0 7 5"><path d="M0.7 0.8 L3.5 3.8 L6.3 0.8" stroke="#e6e6e6" stroke-width="1.2" fill="none" stroke-linecap="round"/></svg>
<svg style="left:877px;top:121px" width="7" height="5" viewBox="0 0 7 5"><path d="M0.7 0.8 L3.5 3.8 L6.3 0.8" stroke="#e6e6e6" stroke-width="1.2" fill="none" stroke-linecap="round"/></svg>
<svg style="left:934px;top:121px" width="7" height="5" viewBox="0 0 7 5"><path d="M0.7 0.8 L3.5 3.8 L6.3 0.8" stroke="#e6e6e6" stroke-width="1.2" fill="none" stroke-linecap="round"/></svg>
<span style="left:358.3px;top:109.5px;font-size:13.3px;color:#fff;line-height:17.3px;line-height:18px;letter-spacing:0.3px;-webkit-text-stroke:0.25px #fff;">Buscar</span>
<div style="left:413px;top:108px;width:222px;height:19px;background:#1e1e1e;border:1px solid #4c4c4c;box-sizing:border-box;"></div>
<div style="left:635px;top:108px;width:17px;height:19px;background:#6e6e6e;border-radius:0 4px 4px 0;"></div>
<svg style="left:639px;top:115px" width="10" height="7" viewBox="0 0 10 7"><path d="M1.2 1.2 L5 5 L8.8 1.2" stroke="#fff" stroke-width="1.5" fill="none" stroke-linecap="round"/></svg>
<span style="left:949.5px;top:101.3px;font-size:13.3px;color:#fff;line-height:17.3px;line-height:18px;letter-spacing:0.2px;-webkit-text-stroke:0.25px #fff;">Actualización</span>
<span style="left:949.5px;top:117.2px;font-size:13.3px;color:#fff;line-height:17.3px;line-height:18px;letter-spacing:-0.1px;-webkit-text-stroke:0.25px #fff;">disponible: v1.1.8</span>
<div style="left:261px;top:136px;width:1px;height:753px;background:#8c8c8c;"></div>
<div style="left:0px;top:140px;width:261px;height:10px;background:#505050;"></div>
<div style="left:0px;top:150px;width:261px;height:7px;background:#6e6e6e;"></div>
<div style="left:0px;top:157px;width:261px;height:1px;background:#b4b4b4;"></div>
<svg style="left:-0.3px;top:140px" width="12.6" height="12.6" viewBox="0 0 24 24"><circle cx="12" cy="12" r="11.5" fill="#3e3e3e"/><path d="M7.2 7.2 L16.8 16.8 M16.8 7.2 L7.2 16.8" stroke="#fff" stroke-width="3.6" stroke-linecap="butt"/></svg>
<svg style="left:17.8px;top:140px" width="12.6" height="12.6" viewBox="0 0 24 24"><circle cx="12" cy="12" r="11.5" fill="#3e3e3e"/><rect x="9.5" y="6.5" width="9" height="7" fill="none" stroke="#fff" stroke-width="1.7"/><rect x="5.5" y="10.5" width="9" height="7" fill="#3e3e3e" stroke="#fff" stroke-width="1.7"/></svg>
<span style="left:-254px;top:140px;font-size:11.3px;color:#ececec;line-height:15.3px;width:800px;text-align:center;line-height:14px;letter-spacing:0.32px;-webkit-text-stroke:0.2px #ececec;">Navegador</span>
<svg style="left:3px;top:164px" width="16" height="16" viewBox="0 0 24 24"><rect x="2" y="2" width="17" height="17" fill="#fff" stroke="#d8d8d8" stroke-width="1"/><rect x="14" y="15" width="8.5" height="8.5" rx="1.5" fill="#5aa05a"/><circle cx="18.2" cy="19.2" r="2.6" fill="#b9d8b9"/></svg>
<svg style="left:32px;top:164px" width="16" height="16" viewBox="0 0 24 24"><path d="M3 11 A9 9 0 0 1 18.5 5.2 L21 2.5 L21.5 11 L13.5 10.5 L16 8 A5.4 5.4 0 0 0 7 11 Z" fill="#4f8ad6" stroke="#2f66b3" stroke-width="0.8"/><path d="M21 13 A9 9 0 0 1 5.5 18.8 L3 21.5 L2.5 13 L10.5 13.5 L8 16 A5.4 5.4 0 0 0 17 13 Z" fill="#4f8ad6" stroke="#2f66b3" stroke-width="0.8"/></svg>
<svg style="left:62px;top:164px" width="16" height="16" viewBox="0 0 24 24"><path d="M3 6 L21 6 L14 14.5 L14 22 L10 20 L10 14.5 Z" fill="#5b8fcf" stroke="#3d6fb0" stroke-width="0.8"/><rect x="2.5" y="2" width="19" height="3.4" fill="#f6dc3a"/></svg>
<svg style="left:92px;top:164px" width="16" height="16" viewBox="0 0 24 24"><path d="M3.5 4 L3.5 20 M3.5 5 L9 5 M3.5 12 L8 12 M3.5 19 L8 19" stroke="#c8c8c8" stroke-width="1.3" fill="none"/><rect x="7" y="9.5" width="5" height="5" fill="#f39a1d"/><rect x="7" y="16.5" width="5" height="5" fill="#f39a1d"/><path d="M17 22 L17 8 M17 3 L11.5 10 L22.5 10 Z" stroke="#4f8ad6" stroke-width="3.2" fill="#4f8ad6" stroke-linejoin="round"/></svg>
<svg style="left:122px;top:164px" width="16" height="16" viewBox="0 0 24 24"><circle cx="12" cy="12" r="10.5" fill="#5b8fcf" stroke="#3d6fb0" stroke-width="0.8"/><text x="12.3" y="18" font-family="Liberation Serif, serif" font-style="italic" font-weight="700" font-size="17" fill="#fff" text-anchor="middle">i</text></svg>
<div style="left:0px;top:186px;width:245px;height:176px;background:#1e1e1e;"></div>
<div style="left:245px;top:186px;width:16px;height:176px;background:#2b2b2b;"></div>
<div style="left:245px;top:186px;width:1px;height:176px;background:#3c3c3c;"></div>
<div style="left:249px;top:190px;width:8px;height:68px;background:#6b6b6b;border-radius:4px;"></div>
<div style="left:0;top:186px;width:245px;height:176px;overflow:hidden">
<svg style="position:absolute;left:23px;top:3px" width="16" height="16" viewBox="0 0 24 24"><path d="M12 0.8 L15.3 8.3 L23.4 9.1 L17.3 14.6 L19.1 22.7 L12 18.5 L4.9 22.7 L6.7 14.6 L0.6 9.1 L8.7 8.3 Z" fill="#fbe94f" stroke="#d9b100" stroke-width="0.9" stroke-linejoin="round"/></svg>
<span style="position:absolute;left:45px;top:3px;font-size:13.3px;line-height:18px;color:#fff;letter-spacing:0.08px;-webkit-text-stroke:0.2px #fff">Favoritos</span>
<svg style="position:absolute;left:4px;top:26px" width="10" height="10" viewBox="0 0 10 10"><path d="M1.5 0.5 L8.5 5 L1.5 9.5 Z" fill="#8e8e8e"/></svg>
<svg style="position:absolute;left:23px;top:23px" width="16" height="16" viewBox="0 0 24 24"><path d="M3 3 L6 1.5 L6 21 L3 22.5 Z" fill="#bdbdbd"/><rect x="5.5" y="1.5" width="16.5" height="19.5" fill="#f7f7f7" stroke="#cfcfcf" stroke-width="0.8"/><path d="M3 22.5 L6 21 L22 21 L22 22.5 Z" fill="#dcdcdc"/><path d="M12.5 1.5 L17.5 1.5 L17.5 12 L15 8.5 L12.5 12 Z" fill="#5b8fcf"/></svg>
<span style="position:absolute;left:45px;top:23px;font-size:13.3px;line-height:18px;color:#fff;letter-spacing:0.08px;-webkit-text-stroke:0.2px #fff">Marcadores espaciales</span>
<svg style="position:absolute;left:4px;top:46px" width="10" height="10" viewBox="0 0 10 10"><path d="M1.5 0.5 L8.5 5 L1.5 9.5 Z" fill="#8e8e8e"/></svg>
<svg style="position:absolute;left:23px;top:43px" width="16" height="16" viewBox="0 0 24 24"><path d="M2 3.5 L11 3.5 L13.5 7 L22.5 7 L22.5 21.5 L2 21.5 Z" fill="#fff" stroke="#dedede" stroke-width="0.8"/><path d="M7.5 14 L12.5 9.5 L17.5 14 M9 13.2 L9 18.5 L16 18.5 L16 13.2" stroke="#222" stroke-width="1.5" fill="none" stroke-linejoin="miter"/></svg>
<span style="position:absolute;left:45px;top:43px;font-size:13.3px;line-height:18px;color:#fff;letter-spacing:0.08px;-webkit-text-stroke:0.2px #fff">Inicio</span>
<svg style="position:absolute;left:4px;top:66px" width="10" height="10" viewBox="0 0 10 10"><path d="M1.5 0.5 L8.5 5 L1.5 9.5 Z" fill="#8e8e8e"/></svg>
<svg style="position:absolute;left:23px;top:63px" width="16" height="16" viewBox="0 0 24 24"><path d="M2 3.5 L11 3.5 L13.5 7 L22.5 7 L22.5 21.5 L2 21.5 Z" fill="#fff" stroke="#dedede" stroke-width="0.8"/></svg>
<span style="position:absolute;left:45px;top:63px;font-size:13.3px;line-height:18px;color:#fff;letter-spacing:0.08px;-webkit-text-stroke:0.2px #fff">/</span>
<svg style="position:absolute;left:4px;top:86px" width="10" height="10" viewBox="0 0 10 10"><path d="M1.5 0.5 L8.5 5 L1.5 9.5 Z" fill="#8e8e8e"/></svg>
<svg style="position:absolute;left:23px;top:83px" width="16" height="16" viewBox="0 0 24 24"><path d="M2 3.5 L11 3.5 L13.5 7 L22.5 7 L22.5 21.5 L2 21.5 Z" fill="#fff" stroke="#dedede" stroke-width="0.8"/></svg>
<span style="position:absolute;left:45px;top:83px;font-size:13.3px;line-height:18px;color:#fff;letter-spacing:0.08px;-webkit-text-stroke:0.2px #fff">/Volumes</span>
<svg style="position:absolute;left:4px;top:106px" width="10" height="10" viewBox="0 0 10 10"><path d="M1.5 0.5 L8.5 5 L1.5 9.5 Z" fill="#8e8e8e"/></svg>
<svg style="position:absolute;left:23px;top:103px" width="16" height="16" viewBox="0 0 24 24"><path d="M1.5 11.5 L12 7 L22.5 11.5 L22.5 18 L12 23 L1.5 18 Z" fill="#f1d32c" stroke="#b8960a" stroke-width="0.8"/><path d="M1.5 11.5 L12 16 L22.5 11.5 M12 16 L12 23" stroke="#b8960a" stroke-width="0.8" fill="none"/><path d="M12 16 L22.5 11.5 L22.5 18 L12 23 Z" fill="#f8e777"/><circle cx="12" cy="8.5" r="7.3" fill="#6f9fd8" stroke="#3d6fb0" stroke-width="0.7"/><path d="M7 6 Q9 3 12 4 Q11 7 8.5 8 Z M13 7 Q16 5 18 8 Q17 12 14 12.5 Q12.5 10 13 7 Z M8 11 Q10 10.5 11 13 Q9.5 14 8 11Z" fill="#dfeaf7"/></svg>
<span style="position:absolute;left:45px;top:103px;font-size:13.3px;line-height:18px;color:#fff;letter-spacing:0.08px;-webkit-text-stroke:0.2px #fff">GeoPackage</span>
<svg style="position:absolute;left:23px;top:123px" width="16" height="16" viewBox="0 0 24 24"><path d="M2 23 Q5 13 11 7.5 Q17 2 23 1 Q22 7 17.5 11 Q12 15.5 6 16.5 Z" fill="#5b8fcf" stroke="#3d6fb0" stroke-width="0.6"/><path d="M2 23 Q7 13 21 2.5" stroke="#24497e" stroke-width="1" fill="none"/></svg>
<span style="position:absolute;left:45px;top:123px;font-size:13.3px;line-height:18px;color:#fff;letter-spacing:0.08px;-webkit-text-stroke:0.2px #fff">SpatiaLite</span>
<svg style="position:absolute;left:23px;top:143px" width="16" height="16" viewBox="0 0 24 24"><path d="M3 8 Q2 2 8 1.5 Q12 0.5 15 2 Q21 1 22.5 6 Q23.5 11 20 15 Q19 18 20.5 19.5 Q18 21.5 16 19 L15.5 14 Q13 15 12 14 L12 21 Q9.5 24 8 21 Q8.5 16 6.5 14.5 Q3.5 12.5 3 8 Z" fill="#5b8fcf" stroke="#3466a6" stroke-width="0.8"/><path d="M9 6 Q11 8 10.5 13 M15 4 Q17.5 7 16 12" stroke="#2c568f" stroke-width="1.1" fill="none"/></svg>
<span style="position:absolute;left:45px;top:143px;font-size:13.3px;line-height:18px;color:#fff;letter-spacing:0.08px;-webkit-text-stroke:0.2px #fff">PostGIS</span>
<svg style="position:absolute;left:23px;top:163px" width="16" height="16" viewBox="0 0 24 24"><path d="M2 2 Q8 3 12 7 Q17 9.5 23 10 L23 22 L7 22 Q9 14 2 2 Z" fill="#5b8fcf"/><path d="M9 6 Q12 14 10.5 22 M13.5 8 Q16 15 15 22 M18 9.5 Q20 15 19.5 22" stroke="#2c568f" stroke-width="1" fill="none"/></svg>
<span style="position:absolute;left:45px;top:163px;font-size:13.3px;line-height:18px;color:#fff;letter-spacing:0.08px;-webkit-text-stroke:0.2px #fff">MSSQL</span>
</div>
<div style="left:0px;top:362px;width:261px;height:1px;background:#a0a0a0;"></div>
<div style="left:0px;top:367px;width:261px;height:10px;background:#505050;"></div>
<div style="left:0px;top:377px;width:261px;height:7px;background:#6e6e6e;"></div>
<div style="left:0px;top:384px;width:261px;height:1px;background:#b4b4b4;"></div>
<svg style="left:-0.3px;top:367px" width="12.6" height="12.6" viewBox="0 0 24 24"><circle cx="12" cy="12" r="11.5" fill="#3e3e3e"/><path d="M7.2 7.2 L16.8 16.8 M16.8 7.2 L7.2 16.8" stroke="#fff" stroke-width="3.6" stroke-linecap="butt"/></svg>
<svg style="left:17.8px;top:367px" width="12.6" height="12.6" viewBox="0 0 24 24"><circle cx="12" cy="12" r="11.5" fill="#3e3e3e"/><rect x="9.5" y="6.5" width="9" height="7" fill="none" stroke="#fff" stroke-width="1.7"/><rect x="5.5" y="10.5" width="9" height="7" fill="#3e3e3e" stroke="#fff" stroke-width="1.7"/></svg>
<span style="left:-254px;top:367px;font-size:11.3px;color:#ececec;line-height:15.3px;width:800px;text-align:center;line-height:14px;letter-spacing:0.32px;-webkit-text-stroke:0.2px #ececec;">Capas</span>
<svg style="left:3px;top:391px" width="16" height="16" viewBox="0 0 24 24"><path d="M3 13 L12 8 L17 15 L8 21 Z" fill="#e23b2e"/><path d="M4 9 L12 5 L16 11 L8 16 Z" fill="#f0c419"/><path d="M5 6 L11 3 L14 7 L8 10.5 Z" fill="#3f78c4"/><path d="M9 13 L15 10 L18 14 L13 19 Z" fill="#d9a86a"/><path d="M15 11 L22 3.5" stroke="#e0a030" stroke-width="2.2" stroke-linecap="round"/></svg>
<svg style="left:33px;top:391px" width="16" height="16" viewBox="0 0 24 24"><path d="M2.5 11 L2.5 21.5 L12 21.5" stroke="#bdbdbd" stroke-width="1.2" fill="none"/><rect x="5" y="6" width="13" height="13" fill="#e9e9e9" stroke="#9a9a9a" stroke-width="0.8"/><path d="M9.5 15 L9.5 4.5 A2.2 2.2 0 0 1 13.9 4.5 L13.9 13" stroke="#3d6fb0" stroke-width="1.7" fill="none"/><rect x="14" y="15" width="8.5" height="8.5" rx="1.5" fill="#5aa05a"/><circle cx="18.2" cy="19.2" r="2.6" fill="#cfe6cf"/></svg>
<svg style="left:63px;top:391px" width="16" height="16" viewBox="0 0 24 24"><path d="M1.5 11 Q11 1 20.5 11 Q11 20 1.5 11 Z" fill="#f4f4f4" stroke="#bdbdbd" stroke-width="0.8"/><path d="M2.5 6.5 Q11 -0.5 20 5.5" stroke="#cfcfcf" stroke-width="1" fill="none"/><circle cx="11" cy="10.5" r="5.4" fill="#5b8fcf"/><circle cx="11" cy="10" r="2.3" fill="#14233a"/><path d="M14.5 18.5 L18 22.5 L23 17.5" stroke="#e6e6e6" stroke-width="1.5" fill="none"/></svg>
<svg style="left:93px;top:391px" width="16" height="16" viewBox="0 0 24 24"><path d="M3 6 L21 6 L14 14.5 L14 22 L10 20 L10 14.5 Z" fill="#5b8fcf" stroke="#3d6fb0" stroke-width="0.8"/><rect x="2.5" y="2" width="19" height="3.4" fill="#f6dc3a"/></svg>
<svg style="left:128px;top:391px" width="16" height="16" viewBox="0 0 24 24"><text x="2" y="15" font-family="Liberation Serif, serif" font-size="20" fill="#8a3f9e">ε</text><rect x="12" y="12.5" width="10.5" height="10.5" rx="1.2" fill="#e0e0e0"/><path d="M13.5 15 L21 15 L18.2 18.4 L18.2 22 L16.3 21 L16.3 18.4 Z" fill="#8a8a8a"/></svg>
<svg style="left:162px;top:391px" width="16" height="16" viewBox="0 0 24 24"><path d="M3.5 4 L3.5 20 M3.5 5 L9 5 M3.5 12 L8 12 M3.5 19 L8 19" stroke="#c8c8c8" stroke-width="1.3" fill="none"/><rect x="7" y="9.5" width="5" height="5" fill="#f39a1d"/><rect x="7" y="16.5" width="5" height="5" fill="#f39a1d"/><path d="M17 2 L17 16 M17 21 L11.5 14 L22.5 14 Z" stroke="#4f8ad6" stroke-width="3.2" fill="#4f8ad6" stroke-linejoin="round"/></svg>
<svg style="left:192px;top:391px" width="16" height="16" viewBox="0 0 24 24"><path d="M3.5 4 L3.5 20 M3.5 5 L9 5 M3.5 12 L8 12 M3.5 19 L8 19" stroke="#c8c8c8" stroke-width="1.3" fill="none"/><rect x="7" y="9.5" width="5" height="5" fill="#f39a1d"/><rect x="7" y="16.5" width="5" height="5" fill="#f39a1d"/><path d="M17 22 L17 8 M17 3 L11.5 10 L22.5 10 Z" stroke="#4f8ad6" stroke-width="3.2" fill="#4f8ad6" stroke-linejoin="round"/></svg>
<svg style="left:222px;top:391px" width="16" height="16" viewBox="0 0 24 24"><rect x="2" y="2" width="17" height="17" fill="#fff" stroke="#d8d8d8" stroke-width="1"/><rect x="13.5" y="15" width="9.5" height="8.5" rx="2" fill="#e03c3c"/><rect x="15.5" y="18.3" width="5.5" height="2" fill="#fff"/></svg>
<svg style="left:145px;top:396px" width="8" height="6" viewBox="0 0 8 6"><path d="M1 1 L4 4.5 L7 1" stroke="#e0e0e0" stroke-width="1.3" fill="none"/></svg>
<div style="left:0px;top:413px;width:261px;height:476px;background:#1e1e1e;"></div>
<div style="left:0px;top:414px;width:261px;height:22px;background:#4d4d4d;"></div>
<svg style="left:25px;top:418px" width="14" height="14" viewBox="0 0 14 14"><rect x="0" y="0" width="14" height="14" rx="3.2" fill="#6a6a6a"/><path d="M3.4 7.4 L5.9 10 L10.6 3.8" stroke="#fff" stroke-width="1.6" fill="none" stroke-linecap="round" stroke-linejoin="round"/></svg>
<div style="left:53px;top:418px;width:14px;height:14px;background:#6b8e7b;border:1px solid #4a6f8a;box-sizing:border-box;"></div>
<span style="left:74px;top:416px;font-size:13px;color:#fff;line-height:17px;font-weight:700;line-height:18px;text-decoration:underline;letter-spacing:0.1px;">JRC_POPULATION_2018</span>
<div style="left:262px;top:140px;width:895px;height:10px;background:#505050;"></div>
<div style="left:262px;top:150px;width:895px;height:7px;background:#6e6e6e;"></div>
<div style="left:262px;top:157px;width:895px;height:1px;background:#b4b4b4;"></div>
<svg style="left:264.4px;top:140px" width="12.6" height="12.6" viewBox="0 0 24 24"><circle cx="12" cy="12" r="11.5" fill="#3e3e3e"/><path d="M7.2 7.2 L16.8 16.8 M16.8 7.2 L7.2 16.8" stroke="#fff" stroke-width="3.6" stroke-linecap="butt"/></svg>
<svg style="left:282.5px;top:140px" width="12.6" height="12.6" viewBox="0 0 24 24"><circle cx="12" cy="12" r="11.5" fill="#3e3e3e"/><rect x="9.5" y="6.5" width="9" height="7" fill="none" stroke="#fff" stroke-width="1.7"/><rect x="5.5" y="10.5" width="9" height="7" fill="#3e3e3e" stroke="#fff" stroke-width="1.7"/></svg>
<span style="left:329.20000000000005px;top:140px;font-size:11.3px;color:#ececec;line-height:15.3px;width:800px;text-align:center;line-height:14px;letter-spacing:0.33px;-webkit-text-stroke:0.2px #ececec;">Controlador temporal</span>
<div style="left:263px;top:158px;width:26px;height:26px;background:#494949;border:1px solid #5e5e5e;box-sizing:border-box;"></div>
<svg style="left:268px;top:163px" width="16" height="16" viewBox="0 0 16 16"><circle cx="8" cy="8.4" r="5.4" fill="#f4f4e8" stroke="#d8d8c8" stroke-width="0.8"/><rect x="6" y="1.6" width="4" height="2" fill="#b8c8a8"/><path d="M1.4 1.6 L14.6 14.6 M14.6 1.6 L1.4 14.6" stroke="#c01010" stroke-width="1.5"/></svg>
<div style="left:290px;top:158px;width:26px;height:26px;background:#494949;border:1px solid #5e5e5e;box-sizing:border-box;"></div>
<svg style="left:295px;top:163px" width="16" height="16" viewBox="0 0 16 16"><circle cx="8" cy="8" r="6.2" fill="#fbfbf2" stroke="#e2e2d2" stroke-width="0.8"/><path d="M8 3.6 L8 8.4 L10.4 10.6" stroke="#4a4a4a" stroke-width="1.4" fill="none" stroke-linecap="round"/></svg>
<div style="left:318px;top:158px;width:26px;height:26px;background:#494949;border:1px solid #5e5e5e;box-sizing:border-box;"></div>
<svg style="left:323px;top:163px" width="16" height="16" viewBox="0 0 16 16"><circle cx="8" cy="8" r="6.2" fill="#fbfbf2" stroke="#e2e2d2" stroke-width="0.8"/><path d="M6 4 L12.4 8 L6 12 Z" fill="#6fae6f" stroke="#3f7f3f" stroke-width="0.8" stroke-linejoin="round"/></svg>
<span style="left:346px;top:163px;font-size:13.3px;color:#fff;line-height:17.3px;line-height:18px;letter-spacing:0.06px;-webkit-text-stroke:0.2px #fff;">Temporal navigation disabled</span>
<div style="left:1120px;top:158px;width:26px;height:26px;background:#494949;border:1px solid #5e5e5e;box-sizing:border-box;"></div>
<svg style="left:1125px;top:163px" width="16" height="16" viewBox="0 0 16 16"><path d="M12.00 8.00 L14.60 8.00 M11.24 10.35 L13.34 11.88 M9.24 11.80 L10.04 14.28 M6.76 11.80 L5.96 14.28 M4.76 10.35 L2.66 11.88 M4.00 8.00 L1.40 8.00 M4.76 5.65 L2.66 4.12 M6.76 4.20 L5.96 1.72 M9.24 4.20 L10.04 1.72 M11.24 5.65 L13.34 4.12 " stroke="#a88800" stroke-width="3" stroke-linecap="round"/><path d="M12.00 8.00 L14.60 8.00 M11.24 10.35 L13.34 11.88 M9.24 11.80 L10.04 14.28 M6.76 11.80 L5.96 14.28 M4.76 10.35 L2.66 11.88 M4.00 8.00 L1.40 8.00 M4.76 5.65 L2.66 4.12 M6.76 4.20 L5.96 1.72 M9.24 4.20 L10.04 1.72 M11.24 5.65 L13.34 4.12 " stroke="#f8e020" stroke-width="2.2" stroke-linecap="round"/><circle cx="8" cy="8" r="4.8" fill="#f8e020"/><circle cx="8" cy="8" r="1.7" fill="#2a2200"/></svg>
<div style="left:1146px;top:158px;width:1px;height:72px;background:#444;"></div>
<div style="left:1150px;top:160px;width:9px;height:47px;background:#6b6b6b;border-radius:4px;"></div>
<div style="left:262px;top:230px;width:895px;height:1px;background:#9a9a9a;"></div>
<div style="left:262px;top:231px;width:895px;height:1px;background:#555;"></div>
<div style="left:263px;top:232px;width:894px;height:408px;background:#fff;"></div>
<svg style="left:263px;top:232px;overflow:hidden" width="894" height="408" viewBox="263 232 894 408">
<defs>
<clipPath id="land"><path d="M625.0 372.5 L624.4 373.2 L610.0 379.6 L595.6 394.0 L579.6 411.6 L563.6 429.2 L550.8 443.6 L544.4 458.0 L544.0 470.0 L546.0 478.7 L552.4 497.9 L560.0 507.0 L570.0 515.5 L566.8 521.9 L550.8 529.9 L534.8 539.5 L522.0 547.5 L520.4 557.1 L506.0 565.0 L502.8 577.9 L504.6 590.0 L503.5 596.5 L485.0 598.0 L463.0 598.0 L452.0 604.5 L435.3 615.5 L425.6 632.0 L419.0 640.0 L412.0 650.0 L335.0 650.0 L320.0 640.0 L304.6 637.0 L285.0 630.0 L263.0 622.6 L243.0 616.0 L243.0 372.5 Z M629.1 506.2 L637.2 501.7 L647.2 498.6 L654.5 499.9 L656.3 505.3 L650.9 510.8 L640.0 519.3 L631.8 517.1 L629.1 511.7 Z M637.2 528.9 L640.9 526.6 L644.5 530.7 L650.5 533.1 L649.9 535.6 L643.6 533.8 L637.8 533.1 Z M701.3 468.5 L708.9 462.7 L718.9 457.2 L728.9 451.8 L743.4 446.7 L752.5 446.0 L753.4 453.6 L752.5 461.8 L763.4 460.9 L770.6 463.6 L768.8 470.8 L761.6 479.0 L756.1 486.3 L748.9 494.4 L739.8 493.5 L728.9 489.0 L723.4 484.4 L723.4 477.2 L718.0 474.5 L710.7 479.4 L705.3 476.3 L701.7 472.6 Z M731.6 505.3 L735.0 502.5 L738.9 502.6 L736.0 506.0 L733.0 507.0 Z M789.7 442.7 L796.0 440.0 L798.8 443.6 L794.2 451.8 L790.6 450.9 Z M801.5 446.3 L809.7 440.9 L816.9 444.5 L820.5 452.7 L819.6 462.7 L815.1 462.7 L806.9 455.4 L801.5 450.0 Z M1099.3 372.6 L1131.7 372.6 L1138.2 381.6 L1144.7 391.4 L1142.6 403.3 L1148.0 418.4 L1145.8 431.4 L1136.0 442.3 L1141.5 453.0 L1140.4 472.6 L1137.1 489.9 L1138.2 507.2 L1133.9 524.5 L1127.4 529.9 L1116.6 522.3 L1105.8 524.5 L1101.4 539.7 L1088.4 546.1 L1077.6 540.7 L1069.0 533.2 L1062.5 539.7 L1051.6 526.7 L1051.6 521.3 L1062.5 515.8 L1061.4 498.5 L1067.9 481.2 L1064.6 468.2 L1062.5 455.2 L1067.9 446.6 L1065.7 431.4 L1063.5 416.3 L1051.6 414.1 L1048.4 403.3 L1051.6 394.6 L1050.6 383.8 L1053.8 381.6 L1058.1 391.4 L1069.0 394.6 L1082.0 388.1 L1092.8 380.6 Z"/></clipPath>
<filter id="bl" filterUnits="userSpaceOnUse" x="223" y="192" width="974" height="488" color-interpolation-filters="sRGB"><feGaussianBlur stdDeviation="4"/></filter>
<filter id="bl2" filterUnits="userSpaceOnUse" x="223" y="192" width="974" height="488" color-interpolation-filters="sRGB"><feGaussianBlur stdDeviation="1.3"/></filter>
<filter id="nz" filterUnits="userSpaceOnUse" x="263" y="232" width="894" height="408" color-interpolation-filters="sRGB">
<feColorMatrix in="SourceGraphic" type="matrix" values="0 0 0 0 0  0 0 0 0 0  0 0 0 0 0  1 0 0 0 0" result="dens"/>
<feTurbulence type="fractalNoise" baseFrequency="0.42" numOctaves="2" seed="3" result="n1"/>
<feColorMatrix in="n1" type="matrix" values="0 0 0 0 0  0 0 0 0 0  0 0 0 0 0  1 0 0 0 0" result="na1"/>
<feTurbulence type="fractalNoise" baseFrequency="0.11" numOctaves="2" seed="11" result="n2"/>
<feColorMatrix in="n2" type="matrix" values="0 0 0 0 0  0 0 0 0 0  0 0 0 0 0  1 0 0 0 0" result="na2"/>
<feComposite in="na1" in2="na2" operator="arithmetic" k1="0" k2="0.72" k3="0.9" k4="-0.31" result="mix"/>
<feComposite in="dens" in2="mix" operator="arithmetic" k1="0" k2="14" k3="-14" k4="0.5" result="t"/>
<feColorMatrix in="SourceGraphic" type="matrix" values="0 0 0 0 0  0 0 0 0 0  0 0 0 0 0  20 0 0 0 -1" result="mask"/>
<feComposite in="t" in2="mask" operator="in" result="t2"/>
<feColorMatrix in="t2" type="matrix" values="0 0 0 0 0.165  0 0 0 0 0.165  0 0 0 0 0.165  0 0 0 1 0"/>
</filter>
</defs>
<g filter="url(#nz)"><g filter="url(#bl2)"><rect x="213" y="182" width="994" height="508" fill="#000"/><g clip-path="url(#land)"><g filter="url(#bl)">
<rect x="213" y="182" width="994" height="508" fill="rgb(106,106,106)"/>
<ellipse cx="470" cy="440" rx="75" ry="48" fill="rgb(111,111,111)"/>
<ellipse cx="300" cy="470" rx="66" ry="50" fill="rgb(94,94,94)"/>
<ellipse cx="430" cy="478" rx="62" ry="26" fill="rgb(98,98,98)"/>
<ellipse cx="330" cy="536" rx="72" ry="13" fill="rgb(98,98,98)"/>
<ellipse cx="420" cy="420" rx="40" ry="14" fill="rgb(102,102,102)"/>
<ellipse cx="325" cy="380" rx="85" ry="14" fill="rgb(143,143,143)"/>
<ellipse cx="345" cy="440" rx="35" ry="11" fill="rgb(125,125,125)"/>
<ellipse cx="500" cy="388" rx="45" ry="12" fill="rgb(117,117,117)"/>
<ellipse cx="470" cy="525" rx="40" ry="22" fill="rgb(117,117,117)"/>
<path d="M233 562 L330 568 L400 580 L480 590 L440 660 L233 660 Z" fill="rgb(125,125,125)"/>
<path d="M233 580 L300 586 L380 600 L460 605 L440 660 L233 660 Z" fill="rgb(140,140,140)"/>
<path d="M233 600 L330 610 L420 625 L440 660 L233 660 Z" fill="rgb(158,158,158)"/>
<path d="M552 372 L626 372 L566 438 Z" fill="rgb(153,153,153)"/>
<path d="M625.0 372.5 L624.4 373.2 L610.0 379.6 L595.6 394.0 L579.6 411.6 L563.6 429.2 L550.8 443.6 L544.4 458.0 L544.0 470.0 L546.0 478.7 L552.4 497.9 L560.0 507.0 L570.0 515.5 L566.8 521.9 L550.8 529.9 L534.8 539.5 L522.0 547.5 L520.4 557.1 L506.0 565.0 L502.8 577.9 L504.6 590.0 L503.5 596.5 L485.0 598.0 L463.0 598.0 L452.0 604.5 L435.3 615.5 L425.6 632.0 L419.0 640.0" stroke="rgb(143,143,143)" stroke-width="56" fill="none" stroke-linejoin="round"/>
<path d="M625.0 372.5 L624.4 373.2 L610.0 379.6 L595.6 394.0 L579.6 411.6 L563.6 429.2 L550.8 443.6 L544.4 458.0 L544.0 470.0 L546.0 478.7 L552.4 497.9 L560.0 507.0 L570.0 515.5 L566.8 521.9 L550.8 529.9 L534.8 539.5 L522.0 547.5 L520.4 557.1 L506.0 565.0 L502.8 577.9 L504.6 590.0 L503.5 596.5 L485.0 598.0 L463.0 598.0 L452.0 604.5 L435.3 615.5 L425.6 632.0 L419.0 640.0" stroke="rgb(194,194,194)" stroke-width="30" fill="none" stroke-linejoin="round"/>
<path d="M552 440 L548 470 L556 500 L572 516" stroke="rgb(217,217,217)" stroke-width="26" fill="none" stroke-linejoin="round"/>
<path d="M600 392 L566 430" stroke="rgb(204,204,204)" stroke-width="20" fill="none"/>
<path d="M560 525 L522 550 L508 570 L505 590 L466 600 L436 616" stroke="rgb(199,199,199)" stroke-width="20" fill="none" stroke-linejoin="round"/>
<path d="M629.1 506.2 L637.2 501.7 L647.2 498.6 L654.5 499.9 L656.3 505.3 L650.9 510.8 L640.0 519.3 L631.8 517.1 L629.1 511.7 Z" fill="rgb(255,255,255)" stroke="rgb(255,255,255)" stroke-width="6"/>
<path d="M637.2 528.9 L640.9 526.6 L644.5 530.7 L650.5 533.1 L649.9 535.6 L643.6 533.8 L637.8 533.1 Z" fill="rgb(255,255,255)" stroke="rgb(255,255,255)" stroke-width="5"/>
<path d="M701.3 468.5 L708.9 462.7 L718.9 457.2 L728.9 451.8 L743.4 446.7 L752.5 446.0 L753.4 453.6 L752.5 461.8 L763.4 460.9 L770.6 463.6 L768.8 470.8 L761.6 479.0 L756.1 486.3 L748.9 494.4 L739.8 493.5 L728.9 489.0 L723.4 484.4 L723.4 477.2 L718.0 474.5 L710.7 479.4 L705.3 476.3 L701.7 472.6 Z" fill="rgb(178,178,178)" stroke="rgb(178,178,178)" stroke-width="8"/>
<ellipse cx="736" cy="482" rx="8" ry="4.5" fill="rgb(102,102,102)"/>
<ellipse cx="731" cy="455" rx="4" ry="3" fill="rgb(115,115,115)"/>
<ellipse cx="757" cy="468" rx="5" ry="4" fill="rgb(128,128,128)"/>
<path d="M731.6 505.3 L735.0 502.5 L738.9 502.6 L736.0 506.0 L733.0 507.0 Z" fill="rgb(255,255,255)" stroke="rgb(255,255,255)" stroke-width="5"/>
<path d="M789.7 442.7 L796.0 440.0 L798.8 443.6 L794.2 451.8 L790.6 450.9 Z" fill="rgb(230,230,230)" stroke="rgb(230,230,230)" stroke-width="6"/>
<path d="M801.5 446.3 L809.7 440.9 L816.9 444.5 L820.5 452.7 L819.6 462.7 L815.1 462.7 L806.9 455.4 L801.5 450.0 Z" fill="rgb(217,217,217)" stroke="rgb(217,217,217)" stroke-width="5"/>
<path d="M1099.3 372.6 L1131.7 372.6 L1138.2 381.6 L1144.7 391.4 L1142.6 403.3 L1148.0 418.4 L1145.8 431.4 L1136.0 442.3 L1141.5 453.0 L1140.4 472.6 L1137.1 489.9 L1138.2 507.2 L1133.9 524.5 L1127.4 529.9 L1116.6 522.3 L1105.8 524.5 L1101.4 539.7 L1088.4 546.1 L1077.6 540.7 L1069.0 533.2 L1062.5 539.7 L1051.6 526.7 L1051.6 521.3 L1062.5 515.8 L1061.4 498.5 L1067.9 481.2 L1064.6 468.2 L1062.5 455.2 L1067.9 446.6 L1065.7 431.4 L1063.5 416.3 L1051.6 414.1 L1048.4 403.3 L1051.6 394.6 L1050.6 383.8 L1053.8 381.6 L1058.1 391.4 L1069.0 394.6 L1082.0 388.1 L1092.8 380.6 Z" fill="rgb(189,189,189)" stroke="rgb(189,189,189)" stroke-width="10"/>
<ellipse cx="1114" cy="405" rx="16" ry="10" fill="rgb(112,112,112)"/>
<ellipse cx="1098" cy="428" rx="24" ry="7" fill="rgb(122,122,122)"/>
<ellipse cx="1120" cy="458" rx="9" ry="9" fill="rgb(107,107,107)"/>
<ellipse cx="1122" cy="495" rx="10" ry="15" fill="rgb(128,128,128)"/>
<ellipse cx="1073" cy="505" rx="7" ry="5" fill="rgb(102,102,102)"/>
<ellipse cx="1088" cy="527" rx="7" ry="7" fill="rgb(92,92,92)"/>
<ellipse cx="1075" cy="440" rx="7" ry="11" fill="rgb(128,128,128)"/>
<ellipse cx="1090" cy="470" rx="10" ry="8" fill="rgb(140,140,140)"/>
<ellipse cx="1128" cy="425" rx="8" ry="8" fill="rgb(115,115,115)"/>
</g></g></g></g>
<path d="M663.5 510.5 L663.5 523.5 L666.6 520.8 L668.9 526 L670.9 525.1 L668.7 520 L672.8 520 Z" fill="#111" stroke="#fff" stroke-width="1" stroke-linejoin="round"/>
</svg>
<div style="left:262px;top:641px;width:895px;height:1px;background:#9a9a9a;"></div>
<div style="left:262px;top:646px;width:895px;height:10px;background:#505050;"></div>
<div style="left:262px;top:656px;width:895px;height:7px;background:#6e6e6e;"></div>
<div style="left:262px;top:663px;width:895px;height:1px;background:#b4b4b4;"></div>
<svg style="left:264.4px;top:646px" width="12.6" height="12.6" viewBox="0 0 24 24"><circle cx="12" cy="12" r="11.5" fill="#3e3e3e"/><path d="M7.2 7.2 L16.8 16.8 M16.8 7.2 L7.2 16.8" stroke="#fff" stroke-width="3.6" stroke-linecap="butt"/></svg>
<svg style="left:282.5px;top:646px" width="12.6" height="12.6" viewBox="0 0 24 24"><circle cx="12" cy="12" r="11.5" fill="#3e3e3e"/><rect x="9.5" y="6.5" width="9" height="7" fill="none" stroke="#fff" stroke-width="1.7"/><rect x="5.5" y="10.5" width="9" height="7" fill="#3e3e3e" stroke="#fff" stroke-width="1.7"/></svg>
<span style="left:330.5px;top:646px;font-size:11.3px;color:#ececec;line-height:15.3px;width:800px;text-align:center;line-height:14px;letter-spacing:0.06px;-webkit-text-stroke:0.2px #ececec;">JRC_POPULATION_2018 — Features Total: 2416631, Filtered: 2416631, Selected: 0</span>
<svg style="left:268px;top:670px" width="16" height="16" viewBox="0 0 16 16"><path d="M2.8 15.2 L4 10.6 L6.6 12.2 Z" fill="#d8d8d8"/><path d="M2.8 15.2 L3.3 13.4 L4.4 14.1 Z" fill="#555"/><path d="M4 10.6 L10.6 0.6 L13.4 2.4 L6.6 12.2 Z" fill="#e9c81a" stroke="#b8960a" stroke-width="0.5"/><path d="M5 11 L11.6 1.4" stroke="#f8e878" stroke-width="0.9"/><path d="M10.6 0.6 L11.2 -0.2 L14 1.6 L13.4 2.4 Z" fill="#f0f0f0"/></svg>
<svg style="left:298px;top:670px" width="16" height="16" viewBox="0 0 16 16"><rect x="1.3" y="1.6" width="13" height="3.4" fill="#4c4c4c"/><rect x="1.3" y="6.4" width="13" height="3.4" fill="#4c4c4c"/><rect x="1.3" y="11.2" width="13" height="3.4" fill="#4c4c4c"/><path d="M5.6 14.6 L14.2 1.6" stroke="#2d2d2d" stroke-width="3"/><path d="M5.8 14.2 L14 1.8" stroke="#555" stroke-width="1.6"/><path d="M11.2 0.6 L15.4 2.2 L12.8 4 Z" fill="#555"/></svg>
<svg style="left:328px;top:670px" width="16" height="16" viewBox="0 0 16 16"><rect x="1" y="0.8" width="13.8" height="14.2" rx="0.8" fill="#4c4c4c"/><path d="M4.2 2.4 L4.2 5 M10.6 2.4 L10.6 5" stroke="#3a3a3a" stroke-width="0.8"/><path d="M5.4 11.6 L7.4 11.6 M5.4 13 L7.4 13 M8.8 9.6 L8.8 12.4 L11 12.4" stroke="#6a6a6a" stroke-width="0.7" fill="none"/><rect x="4.2" y="10.4" width="1" height="1" fill="#3f5f85"/><path d="M14.8 6.6 L15.8 7.2 L14.8 7.8 Z" fill="#4c4c4c"/></svg>
<svg style="left:358px;top:670px" width="16" height="16" viewBox="0 0 16 16"><path d="M1 7 A7 6.8 0 0 1 12.4 2.4 L14.4 0.4 L14.9 7.4 L8.2 6.8 L10.2 4.8 A3.9 3.8 0 0 0 4.4 7 Z" fill="#4f8ad6" stroke="#2f66b3" stroke-width="0.5"/><path d="M14.9 8.6 A7 6.8 0 0 1 3.6 13.4 L1.6 15.4 L1 8.4 L7.8 9 L5.8 11 A3.9 3.8 0 0 0 11.6 8.6 Z" fill="#4f8ad6" stroke="#2f66b3" stroke-width="0.5"/><path d="M2.2 5.6 A6 5.8 0 0 1 11.4 2.6" stroke="#a8c8f0" stroke-width="0.9" fill="none"/></svg>
<svg style="left:398px;top:670px" width="16" height="16" viewBox="0 0 16 16"><rect x="1.1" y="1.2" width="13.4" height="13.4" rx="1" fill="#4c4c4c"/><rect x="2.5" y="2.5999999999999996" width="1" height="1" fill="#3f5f85"/><rect x="11.9" y="2.5999999999999996" width="1" height="1" fill="#3f5f85"/><path d="M2.7 6.2 L4.1 6.2 M5.5 6.2 L12.9 6.2" stroke="#3a3a3a" stroke-width="0.7"/><path d="M2.7 8.4 L4.1 8.4 M5.5 8.4 L12.9 8.4" stroke="#3a3a3a" stroke-width="0.7"/><path d="M2.7 10.600000000000001 L4.1 10.600000000000001 M5.5 10.600000000000001 L12.9 10.600000000000001" stroke="#3a3a3a" stroke-width="0.7"/><path d="M2.7 12.8 L4.1 12.8 M5.5 12.8 L12.9 12.8" stroke="#3a3a3a" stroke-width="0.7"/><rect x="9" y="9" width="6" height="6" fill="#4e4a3c"/><path d="M10.2 10.2 L13.8 13.8 M13.8 10.2 L10.2 13.8 M12 9.6 L12 14.4" stroke="#7a7a7a" stroke-width="0.7"/><path d="M11.8 15.2 L13.8 17.4 L17.4 13.6" stroke="#8a8a8a" stroke-width="0.9" fill="none"/></svg>
<svg style="left:427px;top:670px" width="16" height="16" viewBox="0 0 16 16"><rect x="1.4" y="1.2" width="10" height="10.4" fill="#4c4c4c" stroke="#58463e" stroke-width="0.7"/><path d="M1.4 3 L11.4 3" stroke="#58463e" stroke-width="0.7"/><rect x="3.8" y="4" width="9.4" height="10.6" fill="#4c4c4c" stroke="#58463e" stroke-width="0.7"/></svg>
<svg style="left:456px;top:670px" width="16" height="16" viewBox="0 0 16 16"><path d="M4.4 3.2 L13.6 8.4 M4 7.2 L12.6 7.2" stroke="#5a5a5a" stroke-width="0.9"/><circle cx="13" cy="8" r="1.1" fill="none" stroke="#5a5a5a" stroke-width="0.8"/></svg>
<svg style="left:488px;top:670px" width="16" height="16" viewBox="0 0 16 16"><path d="M6.4 1.8 L10.8 1.8 Q13.4 2 13.4 4.6 L13.4 12 L6.4 12 Z" fill="#525252"/><path d="M3 4.2 L8.2 4.2 L10.8 6.6 L10.8 14.8 L3 14.8 Z" fill="#666"/><path d="M4.4 8 L9 8 M4.4 10 L9 10 M4.4 12 L9 12 M4.4 13.6 L8 13.6" stroke="#444" stroke-width="0.8"/></svg>
<svg style="left:518px;top:670px" width="16" height="16" viewBox="0 0 16 16"><rect x="3" y="1" width="10" height="13.8" fill="#4a4a4a" stroke="#57523f" stroke-width="0.8"/><rect x="4.6" y="2.8" width="6.8" height="11" fill="#636363"/><rect x="5.6" y="0.6" width="4.8" height="2.6" fill="#5c5c5c"/><path d="M6 6 L6 12 M10 6 L10 12 M6 8.6 L10 8.6" stroke="#3c3c3c" stroke-width="1"/><rect x="10" y="2.8" width="1.4" height="1.4" fill="#8a8a8a"/></svg>
<svg style="left:558px;top:670px" width="16" height="16" viewBox="0 0 16 16"><text x="-0.4" y="9.6" font-family="Liberation Serif, serif" font-size="14" fill="#9a3fae">ε</text><rect x="4.9" y="5.3" width="10.2" height="9.6" fill="#f8e532" stroke="#d9b81c" stroke-width="0.7"/><path d="M3.4 8.4 Q5.6 9.6 6.6 7.4" stroke="#9a3fae" stroke-width="0.8" fill="none"/></svg>
<svg style="left:588px;top:670px" width="16" height="16" viewBox="0 0 16 16"><rect x="1.2" y="1" width="14" height="3.9" rx="0.5" fill="#f8e532" stroke="#d9b81c" stroke-width="0.5"/><rect x="1.2" y="6.3" width="14" height="3.6" rx="0.5" fill="#f8e532" stroke="#d9b81c" stroke-width="0.5"/><rect x="1.2" y="11.1" width="14" height="3.8" rx="0.5" fill="#f8e532" stroke="#d9b81c" stroke-width="0.5"/></svg>
<svg style="left:618px;top:670px" width="16" height="16" viewBox="0 0 16 16"><path d="M0.8 1 L14.7 14.8 L0.8 14.8 Z" fill="#f8e532"/><path d="M0.8 1 L14.7 1 L14.7 14.8 Z" fill="#fff"/><path d="M0.8 1 L14.7 14.8" stroke="#1e1e1e" stroke-width="1.4"/><rect x="0.8" y="1" width="13.9" height="13.8" fill="none" stroke="#d9b81c" stroke-width="0.5"/></svg>
<svg style="left:648px;top:670px" width="16" height="16" viewBox="0 0 16 16"><rect x="0.8" y="1" width="10.2" height="9.8" fill="#f8e532" stroke="#d9b81c" stroke-width="0.7"/><rect x="8.3" y="8.3" width="7.7" height="7.7" rx="1.6" fill="#d01818"/><circle cx="12.15" cy="12.15" r="2.5" fill="#e88a8a" stroke="#fff" stroke-width="1.1"/><path d="M10.4 13.9 L13.9 10.4" stroke="#fff" stroke-width="1.1"/></svg>
<svg style="left:678px;top:670px" width="16" height="16" viewBox="0 0 16 16"><path d="M1.4 3.6 L14.8 3.6 L9.4 9.6 L9.4 15.6 L6.8 14.2 L6.8 9.6 Z" fill="#5b8fcf" stroke="#3d6fb0" stroke-width="0.6"/><rect x="1.2" y="0.8" width="13.8" height="2.4" fill="#f6dc3a"/></svg>
<svg style="left:708px;top:670px" width="16" height="16" viewBox="0 0 16 16"><rect x="1.1" y="1" width="13.8" height="13.8" fill="#5b8fcf" stroke="#3a68a6" stroke-width="0.7"/><rect x="1.8" y="1.7" width="12.4" height="2" fill="#a8c4ea"/><rect x="2.2" y="4.4" width="4.6" height="1.6" fill="#d6e4f6"/><rect x="9.2" y="4.4" width="4.6" height="1.6" fill="#d6e4f6"/><rect x="2.2" y="6.8" width="4.6" height="1.6" fill="#d6e4f6"/><rect x="9.2" y="6.8" width="4.6" height="1.6" fill="#d6e4f6"/><rect x="2.2" y="9.2" width="4.6" height="1.6" fill="#d6e4f6"/><rect x="9.2" y="9.2" width="4.6" height="1.6" fill="#d6e4f6"/><rect x="1.8" y="11.6" width="12.4" height="2.6" fill="#f6dc3a"/><path d="M8 2.6 L10.6 5.4 L8.8 5.4 L8.8 11 L7.2 11 L7.2 5.4 L5.4 5.4 Z" fill="#3f78c4"/></svg>
<svg style="left:737px;top:670px" width="16" height="16" viewBox="0 0 16 16"><rect x="2.2" y="1.4" width="9.8" height="9.4" fill="#f8e532" stroke="#d9b81c" stroke-width="0.6"/><path d="M15.8 8.6 L12.8 11.5 L12.8 9.6 L10.6 9.6 L10.6 7.6 L12.8 7.6 L12.8 5.7 Z" fill="#5b8fcf"/><path d="M3.0 8.6 L6.0 5.7 L6.0 7.6 L8.2 7.6 L8.2 9.6 L6.0 9.6 L6.0 11.5 Z" fill="#5b8fcf"/><path d="M9.4 15.0 L6.5 12.0 L8.4 12.0 L8.4 9.8 L10.4 9.8 L10.4 12.0 L12.3 12.0 Z" fill="#5b8fcf"/><path d="M9.4 2.2 L12.3 5.2 L10.4 5.2 L10.4 7.4 L8.4 7.4 L8.4 5.2 L6.5 5.2 Z" fill="#5b8fcf"/></svg>
<svg style="left:768px;top:670px" width="16" height="16" viewBox="0 0 16 16"><rect x="1.2" y="1.4" width="6" height="8.8" fill="#f8e532" stroke="#d9b81c" stroke-width="0.5"/><path d="M6.6 9.4 L5 11.2" stroke="#1a1a1a" stroke-width="1.2"/><path d="M5 11.2 L1.4 15" stroke="#f4d01c" stroke-width="1.8"/><circle cx="10.4" cy="5.5" r="4.9" fill="#cfcfcf" stroke="#ededed" stroke-width="0.9"/><path d="M10.4 1 A4.5 4.5 0 0 0 10.4 10 Z" fill="#ece8c9"/></svg>
<svg style="left:808px;top:670px" width="16" height="16" viewBox="0 0 16 16"><rect x="1" y="1" width="13.4" height="13.6" rx="1" fill="#4c4c4c"/><rect x="2.4" y="2.4" width="1" height="1" fill="#3f5f85"/><rect x="11.8" y="2.4" width="1" height="1" fill="#3f5f85"/><path d="M2.6 6.0 L4 6.0 M5.4 6.0 L12.8 6.0" stroke="#3a3a3a" stroke-width="0.7"/><path d="M2.6 8.2 L4 8.2 M5.4 8.2 L12.8 8.2" stroke="#3a3a3a" stroke-width="0.7"/><path d="M2.6 10.4 L4 10.4 M5.4 10.4 L12.8 10.4" stroke="#3a3a3a" stroke-width="0.7"/><path d="M2.6 12.600000000000001 L4 12.600000000000001 M5.4 12.600000000000001 L12.8 12.600000000000001" stroke="#3a3a3a" stroke-width="0.7"/><rect x="8.6" y="8.4" width="6.6" height="6.6" fill="#4e4a3c"/><path d="M10 9.8 L13.8 13.6 M13.8 9.8 L10 13.6 M11.9 9.2 L11.9 14.2" stroke="#777" stroke-width="0.7"/></svg>
<svg style="left:838px;top:670px" width="16" height="16" viewBox="0 0 16 16"><rect x="1.1" y="1" width="13.4" height="13.6" rx="1" fill="#4c4c4c"/><rect x="2.5" y="2.4" width="1" height="1" fill="#3f5f85"/><rect x="11.9" y="2.4" width="1" height="1" fill="#3f5f85"/><path d="M2.7 6.0 L4.1 6.0 M5.5 6.0 L12.9 6.0" stroke="#3a3a3a" stroke-width="0.7"/><path d="M2.7 8.2 L4.1 8.2 M5.5 8.2 L12.9 8.2" stroke="#3a3a3a" stroke-width="0.7"/><path d="M2.7 10.4 L4.1 10.4 M5.5 10.4 L12.9 10.4" stroke="#3a3a3a" stroke-width="0.7"/><path d="M2.7 12.600000000000001 L4.1 12.600000000000001 M5.5 12.600000000000001 L12.9 12.600000000000001" stroke="#3a3a3a" stroke-width="0.7"/><rect x="9" y="9" width="6.4" height="6" fill="#585858"/><path d="M10.4 10.6 L14 10.6 M10.4 12 L14 12 M10.4 13.4 L14 13.4" stroke="#3c3c3c" stroke-width="0.7"/></svg>
<svg style="left:868px;top:670px" width="16" height="16" viewBox="0 0 16 16"><rect x="1.2" y="1" width="13.8" height="13.8" fill="#f4f8fe" stroke="#5b8fcf" stroke-width="0.8"/><rect x="1.2" y="1" width="13.8" height="2.8" fill="#7fa8da"/><path d="M2.6 5 L5.4 5 M6.8 5 L13.6 5" stroke="#5b8fcf" stroke-width="1"/><path d="M2.6 7.2 L5.4 7.2 M6.8 7.2 L13.6 7.2" stroke="#5b8fcf" stroke-width="1"/><path d="M2.6 9.4 L5.4 9.4 M6.8 9.4 L13.6 9.4" stroke="#5b8fcf" stroke-width="1"/><path d="M2.6 11.6 L5.4 11.6 M6.8 11.6 L13.6 11.6" stroke="#5b8fcf" stroke-width="1"/><path d="M2.6 13.6 L5.4 13.6 M6.8 13.6 L13.6 13.6" stroke="#5b8fcf" stroke-width="1"/><path d="M12.8 0.8 L4.6 13" stroke="#8a3c14" stroke-width="3.4"/><path d="M12.8 0.8 L4.6 13" stroke="#f07a18" stroke-width="2.2"/><path d="M3.4 14.8 L3.8 12 L5.8 13.4 Z" fill="#f0e0c0"/><path d="M12 -0.2 L14.4 1.4" stroke="#f0f0f0" stroke-width="1.2"/></svg>
<svg style="left:898px;top:670px" width="16" height="16" viewBox="0 0 16 16"><path d="M1.4 0.8 L1.4 14.4 M14.6 0.8 L14.6 14.4" stroke="#8e8e8e" stroke-width="0.8"/><path d="M1.4 3.2 L14.6 3.2 M1.4 7.2 L14.6 7.2 M1.4 11.2 L14.6 11.2" stroke="#6e6e6e" stroke-width="0.6"/><path d="M0.8 14.8 L15.2 14.8" stroke="#e6e6e6" stroke-width="1"/><circle cx="6.4" cy="3.2" r="1.6" fill="#d83030"/><circle cx="6.4" cy="3.2" r="0.6" fill="#f6c0c0"/><circle cx="11.6" cy="3.2" r="1.6" fill="#d83030"/><circle cx="11.6" cy="3.2" r="0.6" fill="#f6c0c0"/><circle cx="4.6" cy="7.2" r="1.6" fill="#86c888"/><circle cx="4.6" cy="7.2" r="0.6" fill="#e6f4e6"/><circle cx="8.2" cy="7.2" r="1.6" fill="#86c888"/><circle cx="8.2" cy="7.2" r="0.6" fill="#e6f4e6"/><circle cx="4.6" cy="11.2" r="1.6" fill="#5b8fd8"/><circle cx="4.6" cy="11.2" r="0.6" fill="#d6e6fa"/><circle cx="8.2" cy="11.2" r="1.6" fill="#5b8fd8"/><circle cx="8.2" cy="11.2" r="0.6" fill="#d6e6fa"/><circle cx="11.6" cy="11.2" r="1.6" fill="#5b8fd8"/><circle cx="11.6" cy="11.2" r="0.6" fill="#d6e6fa"/></svg>
<svg style="left:938px;top:670px" width="16" height="16" viewBox="0 0 16 16"><rect x="1.4" y="1.4" width="13.6" height="4.2" rx="0.6" fill="#f4f4f4"/><path d="M6 3.5 L13.4 3.5" stroke="#555" stroke-width="1.2"/><rect x="1.4" y="6.5" width="13.6" height="3.9" rx="0.6" fill="#7fc27f" stroke="#4f9a4f" stroke-width="0.5"/><path d="M6 8.45 L13.4 8.45" stroke="#8e8e8e" stroke-width="1.4"/><rect x="2.4" y="7.4" width="3" height="2.1" fill="#b8e0b8"/><rect x="1.4" y="11.3" width="13.6" height="3.8" rx="0.6" fill="#f4f4f4"/><path d="M5 13.2 L13.4 13.2" stroke="#e06060" stroke-width="1"/><circle cx="3.8" cy="13.2" r="0.9" fill="#c01010"/></svg>
<svg style="left:978px;top:670px" width="16" height="16" viewBox="0 0 16 16"><rect x="3.2" y="1.4" width="11.6" height="11.4" fill="#f4f4f4"/><rect x="3.2" y="1.4" width="11.6" height="2.4" fill="#4a4a4a"/><rect x="1.6" y="6.8" width="11.2" height="7.6" fill="#cfe0f6" stroke="#5b8fcf" stroke-width="0.8"/><rect x="1.6" y="6.8" width="11.2" height="1.8" fill="#7fa8da"/><path d="M5.4 8.6 L5.4 14.4 M9.2 8.6 L9.2 14.4 M1.6 11.4 L12.8 11.4" stroke="#8fb4e4" stroke-width="0.8"/></svg>
<svg style="left:1008px;top:670px" width="16" height="16" viewBox="0 0 16 16"><path d="M10.85 8.56 L12.42 9.21 M8.36 11.05 L9.01 12.62 M4.84 11.05 L4.19 12.62 M2.35 8.56 L0.78 9.21 M2.35 5.04 L0.78 4.39 M4.84 2.55 L4.19 0.98 M8.36 2.55 L9.01 0.98 M10.85 5.04 L12.42 4.39 " stroke="#f0f0f0" stroke-width="2.4"/><circle cx="6.6" cy="6.8" r="5" fill="#f0f0f0"/><circle cx="6.6" cy="6.8" r="3.8" fill="#4f86d0"/><path d="M5.4 4.8 L8.8 6.8 L5.4 8.8 Z" fill="#fff"/><path d="M9.6 9.4 L9.9 15 L11.4 13.6 L13.2 16 L14.4 15.2 L12.6 12.8 L14.6 12.2 Z" fill="#fff" stroke="#1e1e1e" stroke-width="0.6" stroke-linejoin="round"/></svg>
<div style="left:385px;top:667px;width:0;height:22px;border-left:1px dotted #5a5a5a"></div>
<div style="left:545px;top:667px;width:0;height:22px;border-left:1px dotted #5a5a5a"></div>
<div style="left:795px;top:667px;width:0;height:22px;border-left:1px dotted #5a5a5a"></div>
<div style="left:925px;top:667px;width:0;height:22px;border-left:1px dotted #5a5a5a"></div>
<div style="left:965px;top:667px;width:0;height:22px;border-left:1px dotted #5a5a5a"></div>
<div style="left:263px;top:692px;width:894px;height:22px;background:#2e2e2e;"></div>
<div style="left:263px;top:691.5px;width:894px;height:1px;background:#242424;"></div>
<div style="left:321px;top:695px;width:1px;height:17px;background:#b9b9b9;"></div>
<div style="left:421px;top:695px;width:1px;height:17px;background:#b9b9b9;"></div>
<div style="left:521px;top:695px;width:1px;height:17px;background:#b9b9b9;"></div>
<div style="left:621px;top:695px;width:1px;height:17px;background:#b9b9b9;"></div>
<div style="left:721px;top:695px;width:1px;height:17px;background:#b9b9b9;"></div>
<div style="left:821px;top:695px;width:1px;height:17px;background:#b9b9b9;"></div>
<div style="left:921px;top:695px;width:1px;height:17px;background:#b9b9b9;"></div>
<div style="left:1021px;top:695px;width:1px;height:17px;background:#b9b9b9;"></div>
<div style="left:1121px;top:695px;width:1px;height:17px;background:#b9b9b9;"></div>
<span style="left:322px;top:696.5px;font-size:11.2px;color:#fff;line-height:15.2px;width:99px;text-align:center;line-height:14px;letter-spacing:0.1px;-webkit-text-stroke:0.25px #fff;">OBJECTID</span>
<span style="left:422px;top:696.5px;font-size:11.2px;color:#fff;line-height:15.2px;width:99px;text-align:center;line-height:14px;letter-spacing:0.1px;-webkit-text-stroke:0.25px #fff;">GRD_ID</span>
<span style="left:522px;top:696.5px;font-size:11.2px;color:#fff;line-height:15.2px;width:99px;text-align:center;line-height:14px;letter-spacing:0.1px;-webkit-text-stroke:0.25px #fff;">CNTR_ID</span>
<span style="left:622px;top:696.5px;font-size:11.2px;color:#fff;line-height:15.2px;width:99px;text-align:center;line-height:14px;letter-spacing:0.1px;-webkit-text-stroke:0.25px #fff;">TOT_P_2018</span>
<span style="left:722px;top:696.5px;font-size:11.2px;color:#fff;line-height:15.2px;width:99px;text-align:center;line-height:14px;letter-spacing:0.1px;-webkit-text-stroke:0.25px #fff;">Country</span>
<span style="left:822px;top:696.5px;font-size:11.2px;color:#fff;line-height:15.2px;width:99px;text-align:center;line-height:14px;letter-spacing:0.1px;-webkit-text-stroke:0.25px #fff;">Date</span>
<span style="left:922px;top:696.5px;font-size:11.2px;color:#fff;line-height:15.2px;width:99px;text-align:center;line-height:14px;letter-spacing:0.1px;-webkit-text-stroke:0.25px #fff;">Method</span>
<span style="left:1022px;top:696.5px;font-size:11.2px;color:#fff;line-height:15.2px;width:99px;text-align:center;line-height:14px;letter-spacing:0.1px;-webkit-text-stroke:0.25px #fff;">Shape_Leng</span>
<div style="left:263px;top:692px;width:882px;height:149px;overflow:hidden">
<span style="position:absolute;left:879px;top:4.5px;font-size:11.2px;line-height:14px;color:#fff;-webkit-text-stroke:0.25px #fff">Shape_Area</span>
<div style="position:absolute;left:59px;top:22px;width:840px;height:29px;background:#1e1e1e"></div>
<div style="position:absolute;left:59px;top:51px;width:840px;height:1px;background:#fff"></div>
<div style="position:absolute;left:2px;top:51px;width:56px;height:1px;background:#b4b4b4"></div>
<span style="position:absolute;left:4px;top:28px;font-size:11.2px;line-height:16px;color:#fff;-webkit-text-stroke:0.45px #fff">1</span>
<span style="position:absolute;left:59px;top:28px;width:95px;text-align:right;font-size:13.3px;line-height:18px;color:#fff;-webkit-text-stroke:0.2px #fff">1</span>
<span style="position:absolute;left:163.5px;top:28px;font-size:13.3px;line-height:18px;color:#fff;letter-spacing:0.1px;-webkit-text-stroke:0.2px #fff">CRS3035RE...</span>
<span style="position:absolute;left:263.5px;top:28px;font-size:13.3px;line-height:18px;color:#fff;letter-spacing:0.1px;-webkit-text-stroke:0.2px #fff">ES</span>
<span style="position:absolute;left:359px;top:28px;width:95px;text-align:right;font-size:13.3px;line-height:18px;color:#fff;-webkit-text-stroke:0.2px #fff">103</span>
<span style="position:absolute;left:463.5px;top:28px;font-size:13.3px;line-height:18px;color:#fff;letter-spacing:0.1px;-webkit-text-stroke:0.2px #fff">ES</span>
<span style="position:absolute;left:563.5px;top:28px;font-size:13.3px;line-height:18px;color:#fff;letter-spacing:0.1px;-webkit-text-stroke:0.2px #fff">2018-01-01</span>
<span style="position:absolute;left:663.5px;top:28px;font-size:13.3px;line-height:18px;color:#fff;letter-spacing:0.1px;-webkit-text-stroke:0.2px #fff">Aggregation ...</span>
<span style="position:absolute;left:763.5px;top:28px;font-size:13.3px;line-height:18px;color:#fff;letter-spacing:0.1px;-webkit-text-stroke:0.2px #fff">4.000,00000...</span>
<span style="position:absolute;left:865.5px;top:28px;font-size:13.3px;line-height:18px;color:#fff;letter-spacing:0.1px;-webkit-text-stroke:0.2px #fff">1.000.000,0...</span>
<div style="position:absolute;left:59px;top:52px;width:840px;height:29px;background:#2d2d2d"></div>
<div style="position:absolute;left:59px;top:81px;width:840px;height:1px;background:#fff"></div>
<div style="position:absolute;left:2px;top:81px;width:56px;height:1px;background:#b4b4b4"></div>
<span style="position:absolute;left:4px;top:58px;font-size:11.2px;line-height:16px;color:#fff;-webkit-text-stroke:0.45px #fff">2</span>
<span style="position:absolute;left:59px;top:58px;width:95px;text-align:right;font-size:13.3px;line-height:18px;color:#fff;-webkit-text-stroke:0.2px #fff">2</span>
<span style="position:absolute;left:163.5px;top:58px;font-size:13.3px;line-height:18px;color:#fff;letter-spacing:0.1px;-webkit-text-stroke:0.2px #fff">CRS3035RE...</span>
<span style="position:absolute;left:263.5px;top:58px;font-size:13.3px;line-height:18px;color:#fff;letter-spacing:0.1px;-webkit-text-stroke:0.2px #fff">ES</span>
<span style="position:absolute;left:359px;top:58px;width:95px;text-align:right;font-size:13.3px;line-height:18px;color:#fff;-webkit-text-stroke:0.2px #fff">0</span>
<span style="position:absolute;left:465px;top:58px;font-size:13.3px;line-height:18px;color:#8c8c8c;font-style:italic">NULL</span>
<span style="position:absolute;left:565px;top:58px;font-size:13.3px;line-height:18px;color:#8c8c8c;font-style:italic">NULL</span>
<span style="position:absolute;left:665px;top:58px;font-size:13.3px;line-height:18px;color:#8c8c8c;font-style:italic">NULL</span>
<span style="position:absolute;left:763.5px;top:58px;font-size:13.3px;line-height:18px;color:#fff;letter-spacing:0.1px;-webkit-text-stroke:0.2px #fff">4.000,00000...</span>
<span style="position:absolute;left:865.5px;top:58px;font-size:13.3px;line-height:18px;color:#fff;letter-spacing:0.1px;-webkit-text-stroke:0.2px #fff">1.000.000,0...</span>
<div style="position:absolute;left:59px;top:82px;width:840px;height:29px;background:#1e1e1e"></div>
<div style="position:absolute;left:59px;top:111px;width:840px;height:1px;background:#fff"></div>
<div style="position:absolute;left:2px;top:111px;width:56px;height:1px;background:#b4b4b4"></div>
<span style="position:absolute;left:4px;top:88px;font-size:11.2px;line-height:16px;color:#fff;-webkit-text-stroke:0.45px #fff">3</span>
<span style="position:absolute;left:59px;top:88px;width:95px;text-align:right;font-size:13.3px;line-height:18px;color:#fff;-webkit-text-stroke:0.2px #fff">3</span>
<span style="position:absolute;left:163.5px;top:88px;font-size:13.3px;line-height:18px;color:#fff;letter-spacing:0.1px;-webkit-text-stroke:0.2px #fff">CRS3035RE...</span>
<span style="position:absolute;left:263.5px;top:88px;font-size:13.3px;line-height:18px;color:#fff;letter-spacing:0.1px;-webkit-text-stroke:0.2px #fff">ES</span>
<span style="position:absolute;left:359px;top:88px;width:95px;text-align:right;font-size:13.3px;line-height:18px;color:#fff;-webkit-text-stroke:0.2px #fff">0</span>
<span style="position:absolute;left:465px;top:88px;font-size:13.3px;line-height:18px;color:#8c8c8c;font-style:italic">NULL</span>
<span style="position:absolute;left:565px;top:88px;font-size:13.3px;line-height:18px;color:#8c8c8c;font-style:italic">NULL</span>
<span style="position:absolute;left:665px;top:88px;font-size:13.3px;line-height:18px;color:#8c8c8c;font-style:italic">NULL</span>
<span style="position:absolute;left:763.5px;top:88px;font-size:13.3px;line-height:18px;color:#fff;letter-spacing:0.1px;-webkit-text-stroke:0.2px #fff">4.000,00000...</span>
<span style="position:absolute;left:865.5px;top:88px;font-size:13.3px;line-height:18px;color:#fff;letter-spacing:0.1px;-webkit-text-stroke:0.2px #fff">1.000.000,0...</span>
<div style="position:absolute;left:59px;top:112px;width:840px;height:29px;background:#2d2d2d"></div>
<div style="position:absolute;left:59px;top:141px;width:840px;height:1px;background:#fff"></div>
<div style="position:absolute;left:2px;top:141px;width:56px;height:1px;background:#b4b4b4"></div>
<span style="position:absolute;left:4px;top:118px;font-size:11.2px;line-height:16px;color:#fff;-webkit-text-stroke:0.45px #fff">4</span>
<span style="position:absolute;left:59px;top:118px;width:95px;text-align:right;font-size:13.3px;line-height:18px;color:#fff;-webkit-text-stroke:0.2px #fff">4</span>
<span style="position:absolute;left:163.5px;top:118px;font-size:13.3px;line-height:18px;color:#fff;letter-spacing:0.1px;-webkit-text-stroke:0.2px #fff">CRS3035RE...</span>
<span style="position:absolute;left:263.5px;top:118px;font-size:13.3px;line-height:18px;color:#fff;letter-spacing:0.1px;-webkit-text-stroke:0.2px #fff">ES</span>
<span style="position:absolute;left:359px;top:118px;width:95px;text-align:right;font-size:13.3px;line-height:18px;color:#fff;-webkit-text-stroke:0.2px #fff">276</span>
<span style="position:absolute;left:463.5px;top:118px;font-size:13.3px;line-height:18px;color:#fff;letter-spacing:0.1px;-webkit-text-stroke:0.2px #fff">ES</span>
<span style="position:absolute;left:563.5px;top:118px;font-size:13.3px;line-height:18px;color:#fff;letter-spacing:0.1px;-webkit-text-stroke:0.2px #fff">2018-01-01</span>
<span style="position:absolute;left:663.5px;top:118px;font-size:13.3px;line-height:18px;color:#fff;letter-spacing:0.1px;-webkit-text-stroke:0.2px #fff">Aggregation ...</span>
<span style="position:absolute;left:763.5px;top:118px;font-size:13.3px;line-height:18px;color:#fff;letter-spacing:0.1px;-webkit-text-stroke:0.2px #fff">4.000,00000...</span>
<span style="position:absolute;left:865.5px;top:118px;font-size:13.3px;line-height:18px;color:#fff;letter-spacing:0.1px;-webkit-text-stroke:0.2px #fff">1.000.000,0...</span>
<div style="position:absolute;left:59px;top:142px;width:840px;height:29px;background:#1e1e1e"></div>
<div style="position:absolute;left:59px;top:171px;width:840px;height:1px;background:#fff"></div>
<div style="position:absolute;left:2px;top:171px;width:56px;height:1px;background:#b4b4b4"></div>
<span style="position:absolute;left:4px;top:148px;font-size:11.2px;line-height:16px;color:#fff;-webkit-text-stroke:0.45px #fff">5</span>
<span style="position:absolute;left:59px;top:148px;width:95px;text-align:right;font-size:13.3px;line-height:18px;color:#fff;-webkit-text-stroke:0.2px #fff">5</span>
<span style="position:absolute;left:163.5px;top:148px;font-size:13.3px;line-height:18px;color:#fff;letter-spacing:0.1px;-webkit-text-stroke:0.2px #fff">CRS3035RE...</span>
<span style="position:absolute;left:263.5px;top:148px;font-size:13.3px;line-height:18px;color:#fff;letter-spacing:0.1px;-webkit-text-stroke:0.2px #fff">ES</span>
<span style="position:absolute;left:359px;top:148px;width:95px;text-align:right;font-size:13.3px;line-height:18px;color:#fff;-webkit-text-stroke:0.2px #fff">0</span>
<span style="position:absolute;left:465px;top:148px;font-size:13.3px;line-height:18px;color:#8c8c8c;font-style:italic">NULL</span>
<span style="position:absolute;left:565px;top:148px;font-size:13.3px;line-height:18px;color:#8c8c8c;font-style:italic">NULL</span>
<span style="position:absolute;left:665px;top:148px;font-size:13.3px;line-height:18px;color:#8c8c8c;font-style:italic">NULL</span>
<span style="position:absolute;left:763.5px;top:148px;font-size:13.3px;line-height:18px;color:#fff;letter-spacing:0.1px;-webkit-text-stroke:0.2px #fff">4.000,00000...</span>
<span style="position:absolute;left:865.5px;top:148px;font-size:13.3px;line-height:18px;color:#fff;letter-spacing:0.1px;-webkit-text-stroke:0.2px #fff">1.000.000,0...</span>
<div style="position:absolute;left:158px;top:22px;width:1px;height:130px;background:#fff"></div>
<div style="position:absolute;left:258px;top:22px;width:1px;height:130px;background:#fff"></div>
<div style="position:absolute;left:358px;top:22px;width:1px;height:130px;background:#fff"></div>
<div style="position:absolute;left:458px;top:22px;width:1px;height:130px;background:#fff"></div>
<div style="position:absolute;left:558px;top:22px;width:1px;height:130px;background:#fff"></div>
<div style="position:absolute;left:658px;top:22px;width:1px;height:130px;background:#fff"></div>
<div style="position:absolute;left:758px;top:22px;width:1px;height:130px;background:#fff"></div>
<div style="position:absolute;left:858px;top:22px;width:1px;height:130px;background:#fff"></div>
</div>
<div style="left:1145px;top:692px;width:12px;height:150px;background:#2b2b2b;"></div>
<div style="left:1149px;top:696px;width:8px;height:18px;background:#6b6b6b;border-radius:4px;"></div>
<div style="left:263px;top:841px;width:894px;height:1px;background:#444;"></div>
<div style="left:263px;top:842px;width:883px;height:14px;background:#2b2b2b;"></div>
<div style="left:266px;top:845px;width:800px;height:8px;background:#6b6b6b;border-radius:4px;"></div>
<div style="left:263px;top:856px;width:894px;height:1px;background:#222;"></div>
<div style="left:1145px;top:841px;width:12px;height:15px;background:#1e1e1e;"></div>
<div style="left:1145px;top:841px;width:1px;height:15px;background:#d8d8d8;"></div>
<div style="left:265px;top:860px;width:211px;height:26px;background:#4d4d4d;border:1px solid #6a6a6a;box-sizing:border-box;"></div>
<svg style="left:269px;top:865px" width="15" height="15" viewBox="0 0 24 24"><path d="M3 6 L21 6 L14 14.5 L14 22 L10 20 L10 14.5 Z" fill="#5b8fcf" stroke="#3d6fb0" stroke-width="0.8"/><rect x="2.5" y="2" width="19" height="3.4" fill="#f6dc3a"/></svg>
<span style="left:286px;top:866px;font-size:10.8px;color:#fff;line-height:14.8px;line-height:14px;">Mostrar todos los objetos espaciales</span>
<svg style="left:465px;top:878px" width="9" height="6" viewBox="0 0 9 6"><path d="M1 1 L4.5 4.6 L8 1" stroke="#e6e6e6" stroke-width="1.3" fill="none"/></svg>
<div style="left:1107px;top:860px;width:25px;height:26px;background:#4d4d4d;border:1px solid #6a6a6a;box-sizing:border-box;"></div>
<svg style="left:1111.5px;top:865px" width="16" height="16" viewBox="0 0 16 16"><rect x="1" y="1.4" width="14" height="13.2" fill="#e8f0fc" stroke="#5b8fcf" stroke-width="0.9"/><rect x="2.4" y="3" width="6" height="10" fill="#7fa8da"/><path d="M3.4 5 L7.4 5 M3.4 7.4 L7.4 7.4 M3.4 9.8 L7.4 9.8" stroke="#e8f0fc" stroke-width="1"/><rect x="10" y="3.4" width="4" height="3.6" rx="0.6" fill="#fff" stroke="#5b8fcf" stroke-width="0.7"/><rect x="10" y="9" width="4" height="3.6" rx="0.6" fill="#fff" stroke="#5b8fcf" stroke-width="0.7"/></svg>
<div style="left:1133px;top:860px;width:25px;height:26px;background:#4d4d4d;border:1px solid #6a6a6a;box-sizing:border-box;"></div>
<svg style="left:1137.5px;top:865px" width="16" height="16" viewBox="0 0 16 16"><rect x="1" y="0.8" width="14" height="14.4" fill="#f4f8fe" stroke="#5b8fcf" stroke-width="0.9"/><rect x="1" y="0.8" width="14" height="3.2" fill="#7fa8da"/><path d="M2 5.6 L5.6 5.6 M7 5.6 L14 5.6 M2 7.8 L5.6 7.8 M7 7.8 L14 7.8 M2 10 L5.6 10 M7 10 L14 10 M2 12.2 L5.6 12.2 M7 12.2 L14 12.2 M2 14 L5.6 14 M7 14 L14 14 " stroke="#5b8fcf" stroke-width="1.1"/></svg>
<div style="left:0px;top:889px;width:1157px;height:1px;background:#8c8c8c;"></div>
<div style="left:0px;top:890px;width:1157px;height:34px;background:#2e2e2e;"></div>
<div style="left:1px;top:900px;width:288px;height:1px;background:#4a4a4a;"></div>
<div style="left:1px;top:920px;width:288px;height:1px;background:#4a4a4a;"></div>
<svg style="left:9px;top:904px" width="14" height="14" viewBox="0 0 14 14"><circle cx="5.6" cy="5.6" r="4.2" stroke="#9a9a9a" stroke-width="1.3" fill="none"/><path d="M8.8 8.8 L12.8 12.8" stroke="#9a9a9a" stroke-width="1.5" stroke-linecap="round"/></svg>
<span style="left:29px;top:902px;font-size:13.2px;color:#9c9c9c;line-height:17.2px;line-height:18px;">Escriba para localizar (⌘K)</span>
<div style="left:489px;top:909px;width:93px;height:6px;background:#5c5c5c;border-radius:3px;"></div>
<div style="left:497px;top:909px;width:37px;height:6px;background:#8a8a8a;"></div>
<span style="left:592px;top:903px;font-size:11.4px;color:#fff;line-height:15.4px;line-height:16px;-webkit-text-stroke:0.3px #fff;">Coordenada</span>
<div style="left:659px;top:900px;width:112px;height:1px;background:#4a4a4a;"></div>
<div style="left:659px;top:920px;width:112px;height:1px;background:#4a4a4a;"></div>
<span style="left:665px;top:903px;font-size:12px;color:#fff;line-height:16px;line-height:16px;">5266602,1088226</span>
<div style="left:771px;top:898px;width:26px;height:26px;background:#474747;"></div>
<svg style="left:776px;top:903px" width="17" height="17" viewBox="0 0 16 16"><ellipse cx="7.4" cy="7.6" rx="4.4" ry="6.2" fill="#f4f4f4" stroke="#1e1e1e" stroke-width="0.8" transform="rotate(-28 7.4 7.6)"/><path d="M2.6 5.6 L9.4 2.4 M5.4 3.6 L7 7" stroke="#1e1e1e" stroke-width="0.8"/><ellipse cx="4.6" cy="4.8" rx="0.9" ry="1.6" fill="#1e1e1e" transform="rotate(-28 4.6 4.8)"/><path d="M11.6 1.6 L14.8 0.2 M12 3.6 L15.6 3" stroke="#c8c8c8" stroke-width="0.8"/><ellipse cx="11.6" cy="12.4" rx="3.6" ry="2.6" fill="#f4f4f4" stroke="#1e1e1e" stroke-width="0.8"/><circle cx="11.6" cy="12.4" r="1.2" fill="#1e1e1e"/></svg>
<span style="left:806px;top:903px;font-size:11.4px;color:#fff;line-height:15.4px;line-height:16px;-webkit-text-stroke:0.3px #fff;">Escala</span>
<div style="left:845px;top:901px;width:90px;height:19px;background:#1e1e1e;border:1px solid #4a4a4a;box-sizing:border-box;"></div>
<span style="left:847px;top:902px;font-size:11.6px;color:#fff;line-height:15.6px;line-height:16px;">1:4.104.821</span>
<div style="left:934px;top:901px;width:18px;height:19px;background:#555;border-radius:0 4px 4px 0;"></div>
<svg style="left:938px;top:907px" width="10" height="7" viewBox="0 0 10 7"><path d="M1 1 L5 5.2 L9 1" stroke="#f0f0f0" stroke-width="1.6" fill="none" stroke-linecap="round"/></svg>
<div style="left:964px;top:898px;width:26px;height:26px;background:#474747;"></div>
<svg style="left:969px;top:903px" width="16" height="16" viewBox="0 0 16 16"><path d="M4.4 8 L4.4 5.2 A3.6 3.6 0 0 1 11.6 5.2 L11.6 8" stroke="#9a9a9a" stroke-width="1.8" fill="none"/><rect x="2.6" y="7.6" width="10.8" height="7.6" rx="1" fill="#7c7c7c"/></svg>
<span style="left:993px;top:903px;font-size:11.4px;color:#fff;line-height:15.4px;line-height:16px;-webkit-text-stroke:0.3px #fff;">Amplificador</span>
<div style="left:1063px;top:900px;width:68px;height:1px;background:#4a4a4a;"></div>
<div style="left:1063px;top:920px;width:68px;height:1px;background:#4a4a4a;"></div>
<span style="left:1065px;top:903px;font-size:11.6px;color:#fff;line-height:15.6px;line-height:16px;">100%</span>
<div style="left:1132px;top:901px;width:11px;height:20px;background:#555;border-radius:5px;"></div>
<svg style="left:1133px;top:903px" width="9" height="16" viewBox="0 0 9 16"><path d="M1.5 5.5 L4.5 2.5 L7.5 5.5 M1.5 10.5 L4.5 13.5 L7.5 10.5" stroke="#f0f0f0" stroke-width="1.4" fill="none" stroke-linecap="round"/></svg>
<span style="left:1153px;top:903px;font-size:11.4px;color:#fff;line-height:15.4px;line-height:16px;-webkit-text-stroke:0.3px #fff;">Rotación</span>
</div>
</body></html>
